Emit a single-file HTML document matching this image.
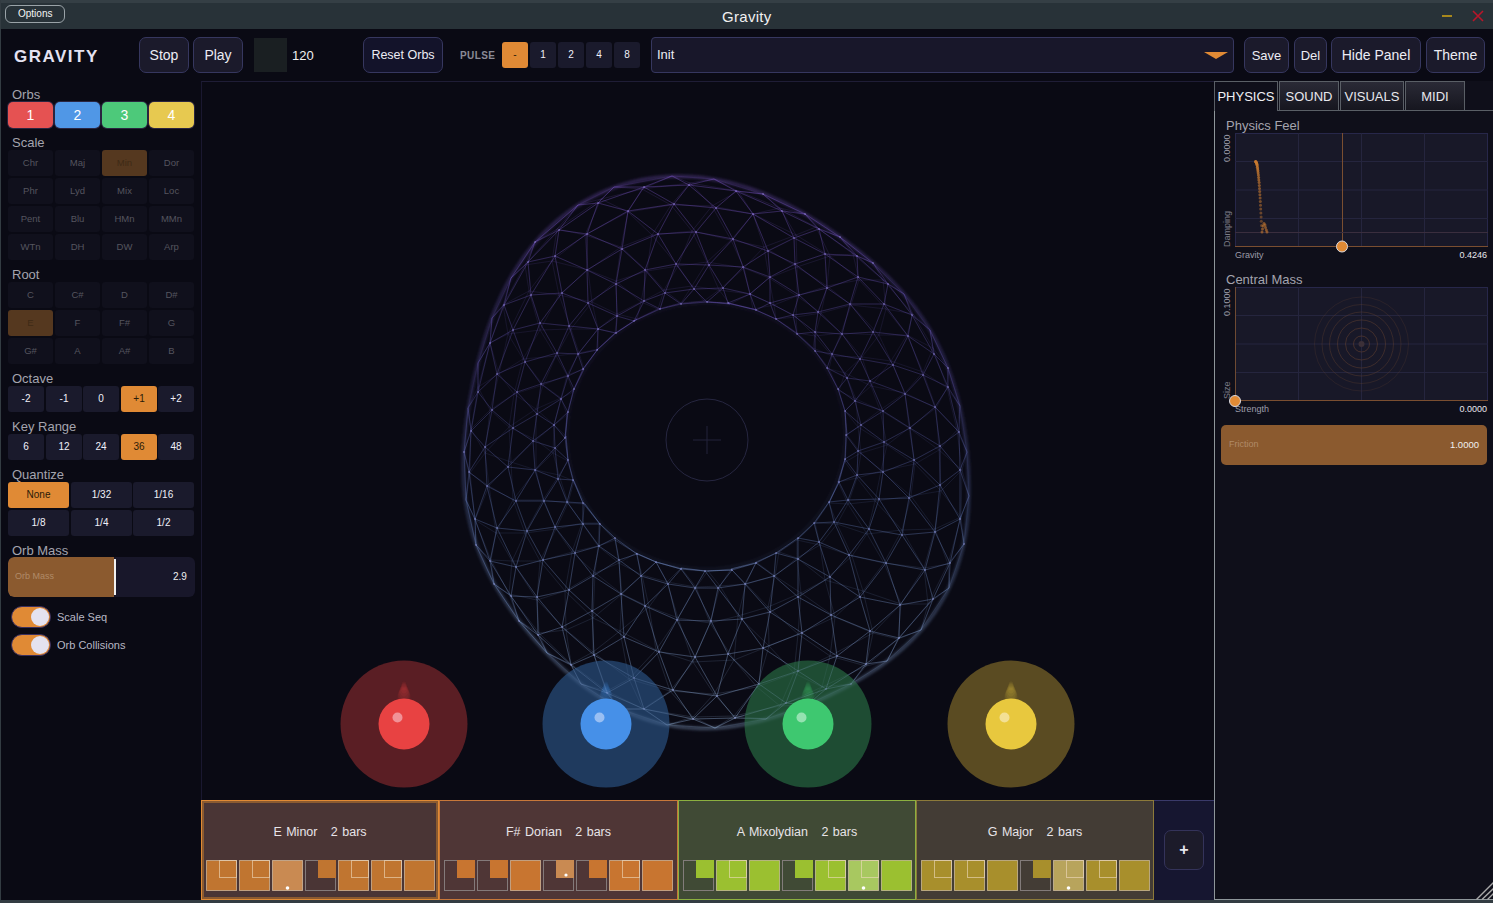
<!DOCTYPE html><html><head><meta charset="utf-8"><style>
*{box-sizing:border-box;margin:0;padding:0}
html,body{width:1493px;height:903px;overflow:hidden;background:#0a0a14;font-family:"Liberation Sans",sans-serif;color:#e8e8f0}
.a{position:absolute}
.t{position:absolute;white-space:nowrap;line-height:1}
.btn{position:absolute;background:#1b1a2b;border:1px solid #36375f;border-radius:7px;color:#ececf4;font-size:14px;display:flex;align-items:center;justify-content:center;line-height:1}
.g{position:absolute;background:#10101c;border-radius:3px;color:#55555f;font-size:9.5px;display:flex;align-items:center;justify-content:center;line-height:1}
.d{position:absolute;background:#1a1a2c;border-radius:3px;color:#f0f0f8;font-size:10px;display:flex;align-items:center;justify-content:center;line-height:1}
.on{background:#e08a35;color:#2a1a08}
.sel{background:#55381f;color:#3e2a16}
.lbl{position:absolute;font-size:13px;color:#a4a4ae;line-height:1;white-space:nowrap}
</style></head><body>
<div class="a" style="left:0;top:0;width:1493px;height:29px;background:#283238"></div>
<div class="a" style="left:0;top:0;width:1493px;height:3px;background:#353f45"></div>
<div class="a" style="left:0;top:0;width:1px;height:903px;background:#333c42"></div>
<div class="a" style="left:0;top:900px;width:1493px;height:3px;background:#333c42"></div>
<div class="a" style="left:5px;top:5px;width:60px;height:18px;border:1px solid #9aa3a8;border-radius:6px;"></div>
<div class="t" style="left:18px;top:9px;font-size:10px;color:#f4f4f4">Options</div>
<div class="t" style="left:722px;top:9px;font-size:15px;color:#f0f0f0;letter-spacing:0.3px">Gravity</div>
<div class="a" style="left:1442px;top:15px;width:10px;height:2px;background:#a8881c"></div>
<svg class="a" style="left:1471px;top:9px" width="14" height="14"><path d="M2 2L12 12M12 2L2 12" stroke="#b8162a" stroke-width="1.6"/></svg>

<div class="t" style="left:14px;top:48px;font-size:17px;font-weight:bold;color:#e4e2f2;letter-spacing:1.5px">GRAVITY</div>
<div class="btn" style="left:139px;top:37px;width:50px;height:36px">Stop</div>
<div class="btn" style="left:193px;top:37px;width:50px;height:36px">Play</div>
<div class="a" style="left:254px;top:38px;width:33px;height:34px;background:#1a1f22"></div>
<div class="t" style="left:292px;top:49px;font-size:13px;color:#f0f0f0">120</div>
<div class="btn" style="left:363px;top:37px;width:80px;height:36px;background:#13132a;font-size:12.5px">Reset Orbs</div>
<div class="t" style="left:460px;top:51px;font-size:10px;font-weight:bold;color:#8a8a96;letter-spacing:0.4px">PULSE</div>
<div class="d on" style="left:502px;top:42px;width:26px;height:26px">-</div>
<div class="d" style="left:530px;top:42px;width:26px;height:26px">1</div>
<div class="d" style="left:558px;top:42px;width:26px;height:26px">2</div>
<div class="d" style="left:586px;top:42px;width:26px;height:26px">4</div>
<div class="d" style="left:614px;top:42px;width:26px;height:26px">8</div>
<div class="btn" style="left:651px;top:37px;width:583px;height:36px;border-radius:4px;justify-content:flex-start;padding-left:5px;padding-bottom:2px;font-size:13px;background:#18172a">Init</div>
<svg class="a" style="left:1204px;top:50px" width="24" height="10"><path d="M0 2L24 2L12 9Z" fill="#e08a35"/></svg>
<div class="btn" style="left:1244px;top:37px;width:45px;height:36px;font-size:13px">Save</div>
<div class="btn" style="left:1294px;top:37px;width:33px;height:36px;font-size:13px">Del</div>
<div class="btn" style="left:1331px;top:37px;width:90px;height:36px">Hide Panel</div>
<div class="btn" style="left:1426px;top:37px;width:59px;height:36px">Theme</div>

<div class="lbl" style="left:12px;top:88px">Orbs</div>
<div class="a" style="left:7px;top:101px;width:47px;height:28px;border-radius:6px;background:#2a2540"></div>
<div class="a" style="left:8px;top:102px;width:45px;height:26px;border-radius:5px;background:#e55252;color:#fff;font-size:14px;display:flex;align-items:center;justify-content:center">1</div>
<div class="a" style="left:54px;top:101px;width:47px;height:28px;border-radius:6px;background:#2a2540"></div>
<div class="a" style="left:55px;top:102px;width:45px;height:26px;border-radius:5px;background:#5097e6;color:#fff;font-size:14px;display:flex;align-items:center;justify-content:center">2</div>
<div class="a" style="left:101px;top:101px;width:47px;height:28px;border-radius:6px;background:#2a2540"></div>
<div class="a" style="left:102px;top:102px;width:45px;height:26px;border-radius:5px;background:#4dc97a;color:#fff;font-size:14px;display:flex;align-items:center;justify-content:center">3</div>
<div class="a" style="left:148px;top:101px;width:47px;height:28px;border-radius:6px;background:#2a2540"></div>
<div class="a" style="left:149px;top:102px;width:45px;height:26px;border-radius:5px;background:#e7c950;color:#fff;font-size:14px;display:flex;align-items:center;justify-content:center">4</div>
<div class="lbl" style="left:12px;top:136px">Scale</div>
<div class="g" style="left:8px;top:150px;width:45px;height:26px">Chr</div>
<div class="g" style="left:55px;top:150px;width:45px;height:26px">Maj</div>
<div class="g sel" style="left:102px;top:150px;width:45px;height:26px">Min</div>
<div class="g" style="left:149px;top:150px;width:45px;height:26px">Dor</div>
<div class="g" style="left:8px;top:178px;width:45px;height:26px">Phr</div>
<div class="g" style="left:55px;top:178px;width:45px;height:26px">Lyd</div>
<div class="g" style="left:102px;top:178px;width:45px;height:26px">Mix</div>
<div class="g" style="left:149px;top:178px;width:45px;height:26px">Loc</div>
<div class="g" style="left:8px;top:206px;width:45px;height:26px">Pent</div>
<div class="g" style="left:55px;top:206px;width:45px;height:26px">Blu</div>
<div class="g" style="left:102px;top:206px;width:45px;height:26px">HMn</div>
<div class="g" style="left:149px;top:206px;width:45px;height:26px">MMn</div>
<div class="g" style="left:8px;top:234px;width:45px;height:26px">WTn</div>
<div class="g" style="left:55px;top:234px;width:45px;height:26px">DH</div>
<div class="g" style="left:102px;top:234px;width:45px;height:26px">DW</div>
<div class="g" style="left:149px;top:234px;width:45px;height:26px">Arp</div>
<div class="lbl" style="left:12px;top:268px">Root</div>
<div class="g" style="left:8px;top:282px;width:45px;height:26px">C</div>
<div class="g" style="left:55px;top:282px;width:45px;height:26px">C#</div>
<div class="g" style="left:102px;top:282px;width:45px;height:26px">D</div>
<div class="g" style="left:149px;top:282px;width:45px;height:26px">D#</div>
<div class="g sel" style="left:8px;top:310px;width:45px;height:26px">E</div>
<div class="g" style="left:55px;top:310px;width:45px;height:26px">F</div>
<div class="g" style="left:102px;top:310px;width:45px;height:26px">F#</div>
<div class="g" style="left:149px;top:310px;width:45px;height:26px">G</div>
<div class="g" style="left:8px;top:338px;width:45px;height:26px">G#</div>
<div class="g" style="left:55px;top:338px;width:45px;height:26px">A</div>
<div class="g" style="left:102px;top:338px;width:45px;height:26px">A#</div>
<div class="g" style="left:149px;top:338px;width:45px;height:26px">B</div>
<div class="lbl" style="left:12px;top:372px">Octave</div>
<div class="d" style="left:8px;top:386px;width:36px;height:26px">-2</div>
<div class="d" style="left:46px;top:386px;width:36px;height:26px">-1</div>
<div class="d" style="left:83px;top:386px;width:36px;height:26px">0</div>
<div class="d on" style="left:121px;top:386px;width:36px;height:26px">+1</div>
<div class="d" style="left:158px;top:386px;width:36px;height:26px">+2</div>
<div class="lbl" style="left:12px;top:420px">Key Range</div>
<div class="d" style="left:8px;top:434px;width:36px;height:26px">6</div>
<div class="d" style="left:46px;top:434px;width:36px;height:26px">12</div>
<div class="d" style="left:83px;top:434px;width:36px;height:26px">24</div>
<div class="d on" style="left:121px;top:434px;width:36px;height:26px">36</div>
<div class="d" style="left:158px;top:434px;width:36px;height:26px">48</div>
<div class="lbl" style="left:12px;top:468px">Quantize</div>
<div class="d on" style="left:8px;top:482px;width:61px;height:26px">None</div>
<div class="d" style="left:71px;top:482px;width:61px;height:26px">1/32</div>
<div class="d" style="left:133px;top:482px;width:61px;height:26px">1/16</div>
<div class="d" style="left:8px;top:510px;width:61px;height:26px">1/8</div>
<div class="d" style="left:71px;top:510px;width:61px;height:26px">1/4</div>
<div class="d" style="left:133px;top:510px;width:61px;height:26px">1/2</div>
<div class="lbl" style="left:12px;top:544px">Orb Mass</div>
<div class="a" style="left:8px;top:557px;width:187px;height:40px;border-radius:6px;background:#18172a;overflow:hidden"><div class="a" style="left:0;top:0;width:106px;height:40px;background:#8b5a2f;border-radius:6px 0 0 6px"></div><div class="a" style="left:106px;top:2px;width:1.5px;height:36px;background:#f0f0f0"></div></div>
<div class="t" style="left:15px;top:572px;font-size:9px;color:#b08a68">Orb Mass</div>
<div class="t" style="left:173px;top:572px;font-size:10px;color:#f0f0f0">2.9</div>
<div class="a" style="left:11px;top:606px;width:40px;height:22px;border-radius:11px;background:#e08a35;border:1px solid #3a3060"></div>
<div class="a" style="left:31px;top:608px;width:18px;height:18px;border-radius:9px;background:#e4e2f0"></div>
<div class="t" style="left:57px;top:612px;font-size:11px;color:#b8b8c4">Scale Seq</div>
<div class="a" style="left:11px;top:634px;width:40px;height:22px;border-radius:11px;background:#e08a35;border:1px solid #3a3060"></div>
<div class="a" style="left:31px;top:636px;width:18px;height:18px;border-radius:9px;background:#e4e2f0"></div>
<div class="t" style="left:57px;top:640px;font-size:11px;color:#b8b8c4">Orb Collisions</div>
<div class="a" style="left:201px;top:81px;width:1013px;height:720px;border-top:1px solid #1f1d36;border-left:1px solid #1a1830;background:#0a0a14"></div>
<svg class="a" style="left:0;top:0" width="1493" height="903"><defs><linearGradient id="tg" gradientUnits="userSpaceOnUse" x1="0" y1="177" x2="0" y2="730"><stop offset="0" stop-color="#9062ec" stop-opacity="0.9"/><stop offset="0.38" stop-color="#7468d8" stop-opacity="0.7"/><stop offset="0.6" stop-color="#7290dc" stop-opacity="0.8"/><stop offset="1" stop-color="#a8ccf8" stop-opacity="1"/></linearGradient><filter id="glow" x="-10%" y="-10%" width="120%" height="120%"><feGaussianBlur stdDeviation="1.5"/></filter></defs><path d="M967.2 453.0L967.8 459.6L968.2 466.3L968.6 473.0L968.8 479.7L968.9 486.4L968.9 493.2L968.7 500.0L968.4 506.9L967.9 513.7L967.3 520.6L966.4 527.5L965.4 534.4L964.1 541.3L962.6 548.1L960.9 554.9L959.0 561.7L956.8 568.4L954.4 575.0L951.7 581.6L948.7 588.1L945.6 594.4L942.1 600.6L938.5 606.7L934.6 612.7L930.4 618.5L926.1 624.1L921.5 629.6L916.7 634.9L911.8 640.0L906.7 644.9L901.4 649.7L896.0 654.3L890.4 658.7L884.7 663.0L879.0 667.1L873.1 671.0L867.1 674.8L861.1 678.5L855.0 682.0L848.9 685.5L842.6 688.8L836.4 692.0L830.1 695.0L823.7 698.0L817.3 700.9L810.8 703.7L804.3 706.4L797.7 709.0L791.0 711.4L784.3 713.8L777.6 716.0L770.8 718.1L763.9 720.0L756.9 721.8L749.9 723.4L742.9 724.8L735.8 726.0L728.6 726.9L721.4 727.7L714.2 728.2L706.9 728.4L699.7 728.4L692.4 728.1L685.2 727.6L678.0 726.7L670.8 725.6L663.7 724.2L656.6 722.5L649.6 720.5L642.7 718.3L635.9 715.8L629.3 713.0L622.7 710.0L616.2 706.8L609.9 703.3L603.7 699.7L597.6 695.8L591.7 691.8L585.9 687.7L580.3 683.4L574.8 679.0L569.4 674.4L564.1 669.8L559.0 665.0L553.9 660.2L549.0 655.3L544.2 650.3L539.5 645.2L534.9 640.1L530.4 634.9L526.1 629.7L521.8 624.4L517.6 619.0L513.5 613.5L509.6 608.0L505.7 602.4L502.0 596.7L498.5 591.0L495.0 585.1L491.7 579.2L488.6 573.2L485.6 567.2L482.8 561.0L480.1 554.8L477.7 548.5L475.4 542.2L473.3 535.7L471.4 529.3L469.8 522.8L468.3 516.2L467.0 509.6L465.9 503.0L465.0 496.3L464.3 489.6L463.8 483.0L463.5 476.3L463.3 469.6L463.3 463.0L463.5 456.3L463.8 449.7L464.2 443.1L464.8 436.5L465.5 429.9L466.2 423.3L467.1 416.8L468.1 410.2L469.2 403.7L470.3 397.2L471.6 390.7L472.9 384.1L474.3 377.6L475.8 371.1L477.4 364.6L479.1 358.0L480.9 351.5L482.7 345.0L484.7 338.4L486.8 331.8L489.1 325.3L491.5 318.7L494.0 312.2L496.7 305.7L499.6 299.2L502.6 292.8L505.8 286.4L509.2 280.0L512.8 273.7L516.6 267.6L520.7 261.5L524.9 255.5L529.3 249.7L534.0 244.0L538.8 238.4L543.9 233.0L549.2 227.8L554.7 222.8L560.4 218.0L566.2 213.4L572.3 209.1L578.5 204.9L584.9 201.1L591.5 197.5L598.2 194.1L605.0 191.1L611.9 188.3L619.0 185.8L626.1 183.6L633.3 181.7L640.6 180.0L648.0 178.7L655.3 177.7L662.7 176.9L670.1 176.4L677.6 176.3L685.0 176.4L692.3 176.7L699.7 177.3L707.0 178.2L714.2 179.4L721.4 180.7L728.5 182.3L735.5 184.1L742.4 186.1L749.2 188.3L756.0 190.7L762.6 193.2L769.1 195.9L775.5 198.8L781.9 201.7L788.1 204.8L794.2 208.0L800.2 211.3L806.1 214.7L811.9 218.2L817.6 221.7L823.3 225.3L828.8 229.0L834.3 232.8L839.7 236.6L845.0 240.5L850.2 244.4L855.4 248.4L860.5 252.5L865.5 256.6L870.5 260.8L875.3 265.1L880.1 269.4L884.8 273.9L889.4 278.4L894.0 283.0L898.4 287.8L902.7 292.6L906.9 297.5L911.0 302.5L915.0 307.6L918.8 312.9L922.5 318.2L926.1 323.6L929.5 329.1L932.7 334.7L935.9 340.4L938.8 346.2L941.6 352.1L944.2 358.0L946.7 364.0L949.0 370.1L951.2 376.2L953.2 382.4L955.1 388.6L956.9 394.9L958.5 401.2L960.0 407.6L961.3 414.0L962.6 420.4L963.7 426.9L964.7 433.3L965.7 439.9L966.5 446.4L967.2 453.0Z" stroke="url(#tg)" stroke-width="2.5" stroke-opacity="0.22" fill="none" filter="url(#glow)"/><path d="M845.0 436.0L845.0 439.5L844.8 443.0L844.6 446.5L844.2 450.0L843.8 453.4L843.3 456.9L842.7 460.3L841.9 463.8L841.1 467.2L840.2 470.6L839.2 473.9L838.1 477.3L837.0 480.6L835.7 483.9L834.3 487.1L832.9 490.3L831.3 493.5L829.7 496.6L828.0 499.7L826.2 502.8L824.3 505.8L822.4 508.7L820.4 511.6L818.2 514.5L816.0 517.3L813.8 520.0L811.4 522.7L809.0 525.3L806.5 527.9L804.0 530.4L801.3 532.8L798.6 535.1L795.9 537.4L793.1 539.7L790.2 541.8L787.3 543.9L784.3 545.9L781.2 547.8L778.1 549.7L775.0 551.5L771.8 553.2L768.5 554.8L765.2 556.3L761.9 557.8L758.6 559.1L755.2 560.4L751.7 561.6L748.3 562.7L744.8 563.7L741.2 564.7L737.7 565.5L734.1 566.2L730.5 566.9L726.9 567.5L723.3 568.0L719.7 568.4L716.0 568.7L712.4 568.9L708.7 569.0L705.1 569.0L701.4 568.9L697.8 568.8L694.1 568.5L690.5 568.2L686.9 567.7L683.3 567.2L679.7 566.6L676.1 565.9L672.5 565.1L669.0 564.2L665.5 563.2L662.0 562.2L658.6 561.0L655.1 559.8L651.8 558.5L648.4 557.0L645.1 555.6L641.8 554.0L638.6 552.3L635.4 550.6L632.3 548.8L629.3 546.9L626.2 544.9L623.3 542.9L620.4 540.8L617.5 538.6L614.7 536.3L612.0 534.0L609.3 531.6L606.7 529.1L604.2 526.6L601.8 524.0L599.4 521.3L597.1 518.6L594.8 515.9L592.7 513.0L590.6 510.2L588.6 507.2L586.7 504.3L584.9 501.2L583.1 498.2L581.5 495.1L579.9 491.9L578.4 488.7L577.0 485.5L575.7 482.2L574.4 478.9L573.3 475.6L572.3 472.2L571.3 468.9L570.5 465.5L569.7 462.1L569.0 458.6L568.5 455.2L568.0 451.7L567.6 448.2L567.3 444.7L567.1 441.2L567.0 437.7L567.0 434.3L567.1 430.8L567.3 427.3L567.6 423.8L568.0 420.3L568.5 416.8L569.0 413.4L569.7 409.9L570.5 406.5L571.3 403.1L572.3 399.8L573.3 396.4L574.4 393.1L575.7 389.8L577.0 386.5L578.4 383.3L579.9 380.1L581.5 376.9L583.1 373.8L584.9 370.8L586.7 367.7L588.6 364.8L590.6 361.8L592.7 359.0L594.8 356.1L597.1 353.4L599.4 350.7L601.8 348.0L604.2 345.4L606.7 342.9L609.3 340.4L612.0 338.0L614.7 335.7L617.5 333.4L620.4 331.2L623.3 329.1L626.2 327.1L629.3 325.1L632.3 323.2L635.4 321.4L638.6 319.7L641.8 318.0L645.1 316.4L648.4 315.0L651.8 313.5L655.1 312.2L658.6 311.0L662.0 309.8L665.5 308.8L669.0 307.8L672.5 306.9L676.1 306.1L679.7 305.4L683.3 304.8L686.9 304.3L690.5 303.8L694.1 303.5L697.8 303.2L701.4 303.1L705.1 303.0L708.7 303.0L712.4 303.1L716.0 303.3L719.7 303.6L723.3 304.0L726.9 304.5L730.5 305.1L734.1 305.8L737.7 306.5L741.2 307.3L744.8 308.3L748.3 309.3L751.7 310.4L755.2 311.6L758.6 312.9L761.9 314.2L765.2 315.7L768.5 317.2L771.8 318.8L775.0 320.5L778.1 322.3L781.2 324.2L784.3 326.1L787.3 328.1L790.2 330.2L793.1 332.3L795.9 334.6L798.6 336.9L801.3 339.2L804.0 341.6L806.5 344.1L809.0 346.7L811.4 349.3L813.8 352.0L816.0 354.7L818.2 357.5L820.4 360.4L822.4 363.3L824.3 366.2L826.2 369.2L828.0 372.3L829.7 375.4L831.3 378.5L832.9 381.7L834.3 384.9L835.7 388.1L837.0 391.4L838.1 394.7L839.2 398.1L840.2 401.4L841.1 404.8L841.9 408.2L842.7 411.7L843.3 415.1L843.8 418.6L844.2 422.0L844.6 425.5L844.8 429.0L845.0 432.5L845.0 436.0Z" stroke="url(#tg)" stroke-width="2" stroke-opacity="0.06" fill="none" filter="url(#glow)"/><path d="M967 452L969 496M967 452L962 470M962 470L969 496M962 470L961 517M962 470L939 450M941 491L962 470M939 450L941 491M939 450L915 464M915 464L941 491M915 464L911 496M915 464L887 445M881 471L915 464M887 445L881 471M887 445L861 453M861 453L881 471M861 453L857 478M861 453L847 435M845 462L861 453M847 435L845 462M847 435L846 435M846 435L845 462M969 496L964 544M969 496L961 517M961 517L964 544M961 517L948 564M961 517L941 491M935 529L961 517M941 491L935 529M941 491L911 496M911 496L935 529M911 496L902 530M911 496L881 471M875 501L911 496M881 471L875 501M881 471L857 478M857 478L875 501M857 478L848 504M857 478L845 462M838 482L857 478M845 462L838 482M845 462L845 459M964 544L949 588M964 544L948 564M948 564L949 588M948 564L928 604M948 564L935 529M924 568L948 564M935 529L924 568M935 529L902 530M902 530L924 568M902 530L884 563M902 530L875 501M867 534L902 530M875 501L867 534M875 501L848 504M848 504L867 534M848 504L837 524M848 504L838 482M829 503L848 504M838 482L829 503M949 588L921 630M949 588L928 604M928 604L921 630M928 604L898 639M928 604L924 568M901 604L928 604M924 568L901 604M924 568L884 563M884 563L901 604M884 563L863 591M884 563L867 534M852 556L884 563M867 534L852 556M867 534L837 524M837 524L852 556M837 524L820 545M837 524L829 503M815 523L837 524M829 503L815 523M829 503L829 502M829 502L815 523M921 630L887 661M921 630L898 639M898 639L887 661M898 639L866 666M898 639L901 604M873 633L898 639M901 604L873 633M901 604L863 591M863 591L873 633M863 591L835 617M863 591L852 556M825 580L863 591M852 556L825 580M852 556L820 545M820 545L825 580M820 545L797 558M820 545L815 523M797 540L820 545M815 523L797 540M815 523L814 523M814 523L797 540M887 661L851 684M887 661L866 666M866 666L851 684M866 666L822 687M866 666L873 633M830 656L866 666M873 633L830 656M873 633L835 617M835 617L830 656M835 617L798 634M835 617L825 580M801 593L835 617M825 580L801 593M825 580L797 558M797 558L801 593M797 558L775 576M797 558L797 540M779 552L797 558M797 540L779 552M797 540L798 538M798 538L779 552M851 684L807 705M851 684L822 687M822 687L807 705M822 687L780 706M822 687L830 656M794 673L822 687M830 656L794 673M830 656L798 634M798 634L794 673M798 634L769 646M798 634L801 593M768 607L798 634M801 593L768 607M801 593L775 576M775 576L768 607M775 576L746 584M775 576L779 552M756 562L775 576M779 552L756 562M779 552L776 553M776 553L756 562M807 705L766 719M807 705L780 706M780 706L766 719M780 706L734 716M780 706L794 673M757 687L780 706M794 673L757 687M794 673L769 646M769 646L757 687M769 646L734 660M769 646L768 607M738 616L769 646M768 607L738 616M768 607L746 584M746 584L738 616M746 584L720 586M746 584L756 562M731 569L746 584M756 562L731 569M766 719L715 728M766 719L734 716M734 716L715 728M734 716L693 717M734 716L757 687M714 694L734 716M757 687L714 694M757 687L734 660M734 660L714 694M734 660L693 662M734 660L738 616M710 623L734 660M738 616L710 623M738 616L720 586M720 586L710 623M720 586L696 587M720 586L731 569M708 571L720 586M731 569L708 571M715 728L667 725M715 728L693 717M693 717L667 725M693 717L643 709M693 717L714 694M670 691L693 717M714 694L670 691M714 694L693 662M693 662L670 691M693 662L656 650M693 662L710 623M678 618L693 662M710 623L678 618M710 623L696 587M696 587L678 618M696 587L667 582M696 587L708 571M681 568L696 587M708 571L681 568M708 571L705 571M667 725L620 709M667 725L643 709M643 709L620 709M643 709L607 691M643 709L670 691M629 679L643 709M670 691L629 679M670 691L656 650M656 650L629 679M656 650L620 631M656 650L678 618M649 607L656 650M678 618L649 607M678 618L667 582M667 582L649 607M667 582L642 575M667 582L681 568M656 562L667 582M681 568L656 562M620 709L581 684M620 709L607 691M607 691L581 684M607 691L571 664M607 691L629 679M593 652L607 691M629 679L593 652M629 679L620 631M620 631L593 652M620 631L593 618M620 631L649 607M622 594L620 631M649 607L622 594M649 607L642 575M642 575L622 594M642 575L619 563M642 575L656 562M636 553L642 575M656 562L636 553M581 684L547 653M581 684L571 664M571 664L547 653M571 664L539 633M571 664L593 652M566 630L571 664M593 652L566 630M593 652L593 618M593 618L566 630M593 618L565 591M593 618L622 594M595 573L593 618M622 594L595 573M622 594L619 563M619 563L595 573M619 563L598 546M619 563L636 553M615 540L619 563M636 553L615 540M637 554L615 540M547 653L539 633M539 633L519 621M539 633L509 594M539 633L566 630M537 600L539 633M566 630L537 600M566 630L565 591M565 591L537 600M565 591L540 561M565 591L595 573M572 552L565 591M595 573L572 552M595 573L598 546M598 546L572 552M598 546L582 523M598 546L615 540M599 523L598 546M615 540L599 523M615 540L615 538M615 538L599 523M519 621L509 594M509 594L494 584M509 594L491 560M509 594L537 600M512 561L509 594M537 600L512 561M537 600L540 561M540 561L512 561M540 561L525 533M540 561L572 552M556 529L540 561M572 552L556 529M572 552L582 523M582 523L556 529M582 523L568 503M582 523L599 523M585 504L582 523M599 523L585 504M599 523L600 524M494 584L491 560M491 560L476 545M491 560L475 520M491 560L512 561M496 533L491 560M512 561L496 533M512 561L525 533M525 533L496 533M525 533L513 500M525 533L556 529M543 500L525 533M556 529L543 500M556 529L568 503M568 503L543 500M568 503L559 475M568 503L585 504M574 481L568 503M585 504L574 481M476 545L475 520M475 520L466 500M475 520L470 473M475 520L496 533M489 486L475 520M496 533L489 486M496 533L513 500M513 500L489 486M513 500L511 462M513 500L543 500M536 470L513 500M543 500L536 470M543 500L559 475M559 475L536 470M559 475L553 453M559 475L574 481M568 461L559 475M574 481L568 461M573 480L568 461M466 500L470 473M470 473L464 452M470 473L471 429M470 473L489 486M485 453L470 473M489 486L485 453M489 486L511 462M511 462L485 453M511 462L509 427M511 462L536 470M536 440L511 462M536 470L536 440M536 470L553 453M553 453L536 440M553 453L554 425M553 453L568 461M566 436L553 453M568 461L566 436M568 461L568 460M464 452L471 429M471 429L468 408M471 429L478 387M471 429L485 453M490 410L471 429M485 453L490 410M485 453L509 427M509 427L490 410M509 427L514 394M509 427L536 440M536 409L509 427M536 440L536 409M536 440L554 425M554 425L536 409M554 425L561 398M554 425L566 436M567 415L554 425M566 436L567 415M468 408L478 363M468 408L478 387M478 387L478 363M478 387L490 343M478 387L490 410M499 374L478 387M490 410L499 374M490 410L514 394M514 394L499 374M514 394L523 359M514 394L536 409M543 385L514 394M536 409L543 385M536 409L561 398M561 398L543 385M561 398L567 375M561 398L567 415M573 392L561 398M567 415L573 392M568 412L573 392M478 363L492 318M478 363L490 343M490 343L492 318M490 343L503 305M490 343L499 374M508 334L490 343M499 374L508 334M499 374L523 359M523 359L508 334M523 359L540 330M523 359L543 385M556 356L523 359M543 385L556 356M543 385L567 375M567 375L556 356M567 375L579 353M567 375L573 392M584 369L567 375M573 392L584 369M492 318L511 278M492 318L503 305M503 305L511 278M503 305L525 265M503 305L508 334M529 291L503 305M508 334L529 291M508 334L540 330M540 330L529 291M540 330L559 295M540 330L556 356M571 329L540 330M556 356L571 329M556 356L579 353M579 353L571 329M579 353L598 329M579 353L584 369M598 349L579 353M584 369L598 349M511 278L525 265M525 265L535 242M525 265L557 229M525 265L529 291M552 261L525 265M529 291L552 261M529 291L559 295M559 295L552 261M559 295L588 270M559 295L571 329M592 302L559 295M571 329L592 302M571 329L598 329M598 329L592 302M598 329L617 314M598 329L598 349M615 333L598 329M598 349L615 333M535 242L557 229M557 229L578 205M557 229L601 199M557 229L552 261M585 235L557 229M552 261L585 235M552 261L588 270M588 270L585 235M588 270L621 247M588 270L592 302M616 281L588 270M592 302L616 281M592 302L617 314M617 314L616 281M617 314L641 302M617 314L615 333M637 319L617 314M615 333L637 319M615 333L616 333M578 205L614 187M578 205L601 199M601 199L614 187M601 199L642 189M601 199L585 235M628 212L601 199M585 235L628 212M585 235L621 247M621 247L628 212M621 247L652 235M621 247L616 281M647 271L621 247M616 281L647 271M616 281L641 302M641 302L647 271M641 302L664 290M641 302L637 319M658 309L641 302M637 319L658 309M634 321L658 309M614 187L672 176M614 187L642 189M642 189L672 176M642 189L690 183M642 189L628 212M671 205L642 189M628 212L671 205M628 212L652 235M652 235L671 205M652 235L692 231M652 235L647 271M678 266L652 235M647 271L678 266M647 271L664 290M664 290L678 266M664 290L692 286M664 290L658 309M681 303L664 290M658 309L681 303M658 309L660 309M660 309L681 303M672 176L714 179M672 176L690 183M690 183L714 179M690 183L738 191M690 183L671 205M712 206L690 183M671 205L712 206M671 205L692 231M692 231L712 206M692 231L731 240M692 231L678 266M707 262L692 231M678 266L707 262M678 266L692 286M692 286L707 262M692 286L719 290M692 286L681 303M704 301L692 286M681 303L704 301M681 303L681 304M681 304L704 301M714 179L763 194M714 179L738 191M738 191L763 194M738 191L780 208M738 191L712 206M753 214L738 191M712 206L753 214M712 206L731 240M731 240L753 214M731 240L764 247M731 240L707 262M744 268L731 240M707 262L744 268M707 262L719 290M719 290L744 268M719 290L750 294M719 290L704 301M730 304L719 290M704 301L730 304M704 301L707 302M763 194L780 208M780 208L805 214M780 208L816 227M780 208L753 214M796 235L780 208M753 214L796 235M753 214L764 247M764 247L796 235M764 247L797 267M764 247L744 268M769 278L764 247M744 268L769 278M744 268L750 294M750 294L769 278M750 294L774 305M750 294L730 304M753 309L750 294M730 304L753 309M805 214L816 227M816 227L840 237M816 227L853 254M816 227L796 235M830 256L816 227M796 235L830 256M796 235L797 267M797 267L830 256M797 267L827 286M797 267L769 278M797 296L797 267M769 278L797 296M769 278L774 305M774 305L797 296M774 305L796 317M774 305L753 309M776 319L774 305M753 309L776 319M756 310L776 319M840 237L853 254M853 254L873 263M853 254L883 280M853 254L830 256M859 280L853 254M830 256L859 280M830 256L827 286M827 286L859 280M827 286L851 305M827 286L797 296M821 313L827 286M797 296L821 313M797 296L796 317M796 317L821 313M796 317L815 336M796 317L776 319M797 333L796 317M776 319L797 333M776 319L776 319M776 319L797 333M873 263L904 294M873 263L883 280M883 280L904 294M883 280L913 314M883 280L859 280M886 309L883 280M859 280L886 309M859 280L851 305M851 305L886 309M851 305L879 335M851 305L821 313M841 333L851 305M821 313L841 333M821 313L815 336M815 336L841 333M815 336L832 356M815 336L797 333M813 348L815 336M797 333L813 348M797 333L797 334M797 334L813 348M904 294L930 330M904 294L913 314M913 314L930 330M913 314L933 348M913 314L886 309M907 335L913 314M886 309L907 335M886 309L879 335M879 335L907 335M879 335L891 361M879 335L841 333M862 357L879 335M841 333L862 357M841 333L832 356M832 356L862 357M832 356L845 373M832 356L813 348M829 369L832 356M813 348L829 369M813 348L815 351M815 351L829 369M930 330L933 348M933 348L948 368M933 348L947 388M933 348L907 335M923 372L933 348M907 335L923 372M907 335L891 361M891 361L923 372M891 361L905 393M891 361L862 357M871 386L891 361M862 357L871 386M862 357L845 373M845 373L871 386M845 373L856 399M845 373L829 369M839 391L845 373M829 369L839 391M829 369L827 368M827 368L839 391M948 368L947 388M947 388L960 406M947 388L957 430M947 388L923 372M936 408L947 388M923 372L936 408M923 372L905 393M905 393L936 408M905 393L909 428M905 393L871 386M880 410L905 393M871 386L880 410M871 386L856 399M856 399L880 410M856 399L858 427M856 399L839 391M845 411L856 399M839 391L845 411M839 391L838 389M838 389L845 411M960 406L967 452M960 406L957 430M957 430L967 452M957 430L962 470M957 430L936 408M939 450L957 430M936 408L939 450M936 408L909 428M909 428L939 450M909 428L915 464M909 428L880 410M887 445L909 428M880 410L887 445M880 410L858 427M858 427L887 445M858 427L861 453M858 427L845 411M847 435L858 427M845 411L847 435" stroke="url(#tg)" stroke-width="0.8" stroke-opacity="0.099" fill="none"/><path d="M846 435L845 459M846 435L858 451M858 451L845 459M858 451L857 475M858 451L884 442M883 472L858 451M884 442L883 472M884 442L914 460M914 460L883 472M914 460L909 498M914 460L940 446M940 485L914 460M940 446L940 485M940 446L960 470M960 470L940 485M960 470L960 519M960 470L967 452M969 496L960 470M845 459L839 482M845 459L857 475M857 475L839 482M857 475L848 500M857 475L883 472M879 499L857 475M883 472L879 499M883 472L909 498M909 498L879 499M909 498L902 535M909 498L940 485M935 532L909 498M940 485L935 532M940 485L960 519M960 519L935 532M960 519L950 563M960 519L969 496M964 544L960 519M845 459L838 482M839 482L829 502M839 482L848 500M848 500L829 502M848 500L834 522M848 500L879 499M869 529L848 500M879 499L869 529M879 499L902 535M902 535L869 529M902 535L886 563M902 535L935 532M925 570L902 535M935 532L925 570M935 532L950 563M950 563L925 570M950 563L933 599M950 563L964 544M949 588L950 563M838 482L839 482M839 482L829 503M829 502L814 523M829 502L834 522M834 522L814 523M834 522L819 542M834 522L869 529M849 555L834 522M869 529L849 555M869 529L886 563M886 563L849 555M886 563L860 597M886 563L925 570M900 605L886 563M925 570L900 605M925 570L933 599M933 599L900 605M933 599L899 638M933 599L949 588M921 630L933 599M814 523L798 538M814 523L819 542M819 542L798 538M819 542L798 559M819 542L849 555M830 577L819 542M849 555L830 577M849 555L860 597M860 597L830 577M860 597L831 615M860 597L900 605M870 631L860 597M900 605L870 631M900 605L899 638M899 638L870 631M899 638L866 664M899 638L921 630M887 661L899 638M798 538L776 553M798 538L798 559M798 559L776 553M798 559L774 576M798 559L830 577M798 597L798 559M830 577L798 597M830 577L831 615M831 615L798 597M831 615L802 633M831 615L870 631M837 656L831 615M870 631L837 656M870 631L866 664M866 664L837 656M866 664L826 689M866 664L887 661M851 684L866 664M776 553L756 563M776 553L774 576M774 576L756 563M774 576L745 584M774 576L798 597M770 612L774 576M798 597L770 612M798 597L802 633M802 633L770 612M802 633L763 648M802 633L837 656M798 671L802 633M837 656L798 671M837 656L826 689M826 689L798 671M826 689L786 703M826 689L851 684M807 705L826 689M756 563L732 570M756 563L745 584M745 584L732 570M745 584L718 588M745 584L770 612M742 619L745 584M770 612L742 619M770 612L763 648M763 648L742 619M763 648L728 654M763 648L798 671M759 684L763 648M798 671L759 684M798 671L786 703M786 703L759 684M786 703L735 718M786 703L807 705M766 719L786 703M756 562L756 563M756 563L731 569M732 570L705 571M732 570L718 588M718 588L705 571M718 588L695 588M718 588L742 619M711 621L718 588M742 619L711 621M742 619L728 654M728 654L711 621M728 654L695 657M728 654L759 684M717 696L728 654M759 684L717 696M759 684L735 718M735 718L717 696M735 718L693 719M735 718L766 719M715 728L735 718M731 569L732 570M732 570L708 571M705 571L681 569M705 571L695 588M695 588L681 569M695 588L668 584M695 588L711 621M677 620L695 588M711 621L677 620M711 621L695 657M695 657L677 620M695 657L659 652M695 657L717 696M673 690L695 657M717 696L673 690M717 696L693 719M693 719L673 690M693 719L644 709M693 719L715 728M667 725L693 719M705 571L681 568M681 569L656 562M681 569L668 584M668 584L656 562M668 584L641 576M668 584L677 620M645 606L668 584M677 620L645 606M677 620L659 652M659 652L645 606M659 652L624 637M659 652L673 690M634 678L659 652M673 690L634 678M673 690L644 709M644 709L634 678M644 709L607 693M644 709L667 725M620 709L644 709M681 568L681 569M681 569L656 562M656 562L637 554M656 562L641 576M641 576L637 554M641 576L619 560M641 576L645 606M621 594L641 576M645 606L621 594M645 606L624 637M624 637L621 594M624 637L592 611M624 637L634 678M594 655L624 637M634 678L594 655M634 678L607 693M607 693L594 655M607 693L571 665M607 693L620 709M581 684L607 693M656 562L656 562M656 562L636 553M637 554L615 538M637 554L619 560M619 560L615 538M619 560L599 546M619 560L621 594M593 576L619 560M621 594L593 576M621 594L592 611M592 611L593 576M592 611L569 590M592 611L594 655M562 627L592 611M594 655L562 627M594 655L571 665M571 665L562 627M571 665L538 635M571 665L581 684M547 653L571 665M636 553L637 554M615 538L600 524M615 538L599 546M599 546L600 524M599 546L583 524M599 546L593 576M575 553L599 546M593 576L575 553M593 576L569 590M569 590L575 553M569 590L543 560M569 590L562 627M537 597L569 590M562 627L537 597M562 627L538 635M538 635L537 597M538 635L511 596M538 635L547 653M519 621L538 635M547 653L519 621M600 524L583 503M600 524L583 524M583 524L583 503M583 524L567 502M583 524L575 553M555 527L583 524M575 553L555 527M575 553L543 560M543 560L555 527M543 560L527 531M543 560L537 597M516 567L543 560M537 597L516 567M537 597L511 596M511 596L516 567M511 596L490 561M511 596L519 621M494 584L511 596M519 621L494 584M600 524L585 504M583 503L573 480M583 503L567 502M567 502L573 480M567 502L558 479M567 502L555 527M544 501L567 502M555 527L544 501M555 527L527 531M527 531L544 501M527 531L516 501M527 531L516 567M497 528L527 531M516 567L497 528M516 567L490 561M490 561L497 528M490 561L475 519M490 561L494 584M476 545L490 561M494 584L476 545M585 504L583 503M583 503L574 481M573 480L568 460M573 480L558 479M558 479L568 460M558 479L555 448M558 479L544 501M535 470L558 479M544 501L535 470M544 501L516 501M516 501L535 470M516 501L508 467M516 501L497 528M487 486L516 501M497 528L487 486M497 528L475 519M475 519L487 486M475 519L469 472M475 519L476 545M466 500L475 519M476 545L466 500M574 481L573 480M568 460L565 438M568 460L555 448M555 448L565 438M555 448L554 425M555 448L535 470M533 441L555 448M535 470L533 441M535 470L508 467M508 467L533 441M508 467L513 428M508 467L487 486M485 447L508 467M487 486L485 447M487 486L469 472M469 472L485 447M469 472L471 431M469 472L466 500M464 452L469 472M466 500L464 452M568 460L566 436M565 438L568 412M565 438L554 425M554 425L568 412M554 425L561 399M554 425L533 441M537 414L554 425M533 441L537 414M533 441L513 428M513 428L537 414M513 428L517 392M513 428L485 447M492 410L513 428M485 447L492 410M485 447L471 431M471 431L492 410M471 431L478 392M471 431L464 452M468 408L471 431M464 452L468 408M566 436L565 438M565 438L567 415M568 412L574 389M568 412L561 399M561 399L574 389M561 399L568 376M561 399L537 414M541 384L561 399M537 414L541 384M537 414L517 392M517 392L541 384M517 392L525 362M517 392L492 410M497 374L517 392M492 410L497 374M492 410L478 392M478 392L497 374M478 392L490 343M478 392L468 408M478 363L478 392M567 415L568 412M574 389L583 369M574 389L568 376M568 376L583 369M568 376L578 354M568 376L541 384M557 353L568 376M541 384L557 353M541 384L525 362M525 362L557 353M525 362L540 323M525 362L497 374M513 330L525 362M497 374L513 330M497 374L490 343M490 343L513 330M490 343L504 305M490 343L478 363M492 318L490 343M573 392L574 389M574 389L584 369M583 369L597 350M583 369L578 354M578 354L597 350M578 354L598 329M578 354L557 353M569 326L578 354M557 353L569 326M557 353L540 323M540 323L569 326M540 323L562 293M540 323L513 330M531 295L540 323M513 330L531 295M513 330L504 305M504 305L531 295M504 305L528 262M504 305L492 318M511 278L504 305M584 369L583 369M583 369L598 349M597 350L616 333M597 350L598 329M598 329L616 333M598 329L617 316M598 329L569 326M588 303L598 329M569 326L588 303M569 326L562 293M562 293L588 303M562 293L587 270M562 293L531 295M555 256L562 293M531 295L555 256M531 295L528 262M528 262L555 256M528 262L559 230M528 262L511 278M535 242L528 262M511 278L535 242M598 349L597 350M597 350L615 333M616 333L634 321M616 333L617 316M617 316L634 321M617 316L644 301M617 316L588 303M616 284L617 316M588 303L616 284M588 303L587 270M587 270L616 284M587 270L622 249M587 270L555 256M587 234L587 270M555 256L587 234M555 256L559 230M559 230L587 234M559 230L598 203M559 230L535 242M578 205L559 230M535 242L578 205M616 333L637 319M634 321L660 309M634 321L644 301M644 301L660 309M644 301L665 293M644 301L616 284M645 270L644 301M616 284L645 270M616 284L622 249M622 249L645 270M622 249L658 234M622 249L587 234M628 211L622 249M587 234L628 211M587 234L598 203M598 203L628 211M598 203L644 187M598 203L578 205M614 187L598 203M637 319L634 321M660 309L681 304M660 309L665 293M665 293L681 304M665 293L694 289M665 293L645 270M676 264L665 293M645 270L676 264M645 270L658 234M658 234L676 264M658 234L696 232M658 234L628 211M674 204L658 234M628 211L674 204M628 211L644 187M644 187L674 204M644 187L689 185M644 187L614 187M672 176L644 187M681 304L707 302M681 304L694 289M694 289L707 302M694 289L723 288M694 289L676 264M709 265L694 289M676 264L709 265M676 264L696 232M696 232L709 265M696 232L733 239M696 232L674 204M716 208L696 232M674 204L716 208M674 204L689 185M689 185L716 208M689 185L736 191M689 185L672 176M714 179L689 185M707 302L728 303M707 302L723 288M723 288L728 303M723 288L750 294M723 288L709 265M743 267L723 288M709 265L743 267M709 265L733 239M733 239L743 267M733 239L768 251M733 239L716 208M753 214L733 239M716 208L753 214M716 208L736 191M736 191L753 214M736 191L782 211M736 191L714 179M763 194L736 191M707 302L730 304M728 303L756 310M728 303L750 294M750 294L756 310M750 294L770 303M750 294L743 267M770 277L750 294M743 267L770 277M743 267L768 251M768 251L770 277M768 251L795 264M768 251L753 214M794 238L768 251M753 214L794 238M753 214L782 211M782 211L794 238M782 211L819 229M782 211L763 194M805 214L782 211M763 194L805 214M730 304L728 303M728 303L753 309M756 310L776 319M756 310L770 303M770 303L776 319M770 303L793 315M770 303L770 277M799 295L770 303M770 277L799 295M770 277L795 264M795 264L799 295M795 264L827 288M795 264L794 238M825 254L795 264M794 238L825 254M794 238L819 229M819 229L825 254M819 229L857 256M819 229L805 214M840 237L819 229M805 214L840 237M753 309L756 310M776 319L797 334M776 319L793 315M793 315L797 334M793 315L815 332M793 315L799 295M818 312L793 315M799 295L818 312M799 295L827 288M827 288L818 312M827 288L850 304M827 288L825 254M858 277L827 288M825 254L858 277M825 254L857 256M857 256L858 277M857 256L888 284M857 256L840 237M873 263L857 256M840 237L873 263M797 334L815 351M797 334L815 332M815 332L815 351M815 332L832 354M815 332L818 312M842 334L815 332M818 312L842 334M818 312L850 304M850 304L842 334M850 304L873 332M850 304L858 277M884 304L850 304M858 277L884 304M858 277L888 284M888 284L884 304M888 284L912 315M888 284L873 263M904 294L888 284M815 351L827 368M815 351L832 354M832 354L827 368M832 354L847 378M832 354L842 334M860 359L832 354M842 334L860 359M842 334L873 332M873 332L860 359M873 332L893 365M873 332L884 304M908 336L873 332M884 304L908 336M884 304L912 315M912 315L908 336M912 315L934 354M912 315L904 294M930 330L912 315M827 368L838 389M827 368L847 378M847 378L838 389M847 378L855 401M847 378L860 359M870 381L847 378M860 359L870 381M860 359L893 365M893 365L870 381M893 365L905 394M893 365L908 336M923 375L893 365M908 336L923 375M908 336L934 354M934 354L923 375M934 354L948 387M934 354L930 330M948 368L934 354M930 330L948 368M838 389L845 411M838 389L855 401M855 401L845 411M855 401L861 425M855 401L870 381M883 411L855 401M870 381L883 411M870 381L905 394M905 394L883 411M905 394L910 428M905 394L923 375M935 407L905 394M923 375L935 407M923 375L948 387M948 387L935 407M948 387L959 432M948 387L948 368M960 406L948 387M948 368L960 406M845 411L846 435M845 411L861 425M861 425L846 435M861 425L858 451M861 425L883 411M884 442L861 425M883 411L884 442M883 411L910 428M910 428L884 442M910 428L914 460M910 428L935 407M940 446L910 428M935 407L940 446M935 407L959 432M959 432L940 446M959 432L960 470M959 432L960 406M967 452L959 432M845 411L845 411M845 411L847 435" stroke="url(#tg)" stroke-width="0.9" stroke-opacity="0.22" fill="none"/><path d="M846 435h0.1M858 451h0.1M884 442h0.1M914 460h0.1M940 446h0.1M960 470h0.1M845 459h0.1M857 475h0.1M883 472h0.1M909 498h0.1M940 485h0.1M960 519h0.1M839 482h0.1M848 500h0.1M879 499h0.1M902 535h0.1M935 532h0.1M950 563h0.1M964 544h0.1M829 502h0.1M834 522h0.1M869 529h0.1M886 563h0.1M925 570h0.1M933 599h0.1M814 523h0.1M819 542h0.1M849 555h0.1M860 597h0.1M900 605h0.1M899 638h0.1M798 538h0.1M798 559h0.1M830 577h0.1M831 615h0.1M870 631h0.1M866 664h0.1M776 553h0.1M774 576h0.1M798 597h0.1M802 633h0.1M837 656h0.1M826 689h0.1M851 684h0.1M756 563h0.1M745 584h0.1M770 612h0.1M763 648h0.1M798 671h0.1M786 703h0.1M732 570h0.1M718 588h0.1M742 619h0.1M728 654h0.1M759 684h0.1M735 718h0.1M705 571h0.1M695 588h0.1M711 621h0.1M695 657h0.1M717 696h0.1M693 719h0.1M681 569h0.1M668 584h0.1M677 620h0.1M659 652h0.1M673 690h0.1M644 709h0.1M656 562h0.1M641 576h0.1M645 606h0.1M624 637h0.1M634 678h0.1M607 693h0.1M637 554h0.1M619 560h0.1M621 594h0.1M592 611h0.1M594 655h0.1M571 665h0.1M615 538h0.1M599 546h0.1M593 576h0.1M569 590h0.1M562 627h0.1M538 635h0.1M600 524h0.1M583 524h0.1M575 553h0.1M543 560h0.1M537 597h0.1M511 596h0.1M519 621h0.1M583 503h0.1M567 502h0.1M555 527h0.1M527 531h0.1M516 567h0.1M490 561h0.1M494 584h0.1M573 480h0.1M558 479h0.1M544 501h0.1M516 501h0.1M497 528h0.1M475 519h0.1M476 545h0.1M568 460h0.1M555 448h0.1M535 470h0.1M508 467h0.1M487 486h0.1M469 472h0.1M565 438h0.1M554 425h0.1M533 441h0.1M513 428h0.1M485 447h0.1M471 431h0.1M464 452h0.1M568 412h0.1M561 399h0.1M537 414h0.1M517 392h0.1M492 410h0.1M478 392h0.1M574 389h0.1M568 376h0.1M541 384h0.1M525 362h0.1M497 374h0.1M490 343h0.1M583 369h0.1M578 354h0.1M557 353h0.1M540 323h0.1M513 330h0.1M504 305h0.1M597 350h0.1M598 329h0.1M569 326h0.1M562 293h0.1M531 295h0.1M528 262h0.1M616 333h0.1M617 316h0.1M588 303h0.1M587 270h0.1M555 256h0.1M559 230h0.1M535 242h0.1M634 321h0.1M644 301h0.1M616 284h0.1M622 249h0.1M587 234h0.1M598 203h0.1M660 309h0.1M665 293h0.1M645 270h0.1M658 234h0.1M628 211h0.1M644 187h0.1M681 304h0.1M694 289h0.1M676 264h0.1M696 232h0.1M674 204h0.1M689 185h0.1M707 302h0.1M723 288h0.1M709 265h0.1M733 239h0.1M716 208h0.1M736 191h0.1M728 303h0.1M750 294h0.1M743 267h0.1M768 251h0.1M753 214h0.1M782 211h0.1M763 194h0.1M756 310h0.1M770 303h0.1M770 277h0.1M795 264h0.1M794 238h0.1M819 229h0.1M805 214h0.1M776 319h0.1M793 315h0.1M799 295h0.1M827 288h0.1M825 254h0.1M857 256h0.1M840 237h0.1M797 334h0.1M815 332h0.1M818 312h0.1M850 304h0.1M858 277h0.1M888 284h0.1M873 263h0.1M815 351h0.1M832 354h0.1M842 334h0.1M873 332h0.1M884 304h0.1M912 315h0.1M827 368h0.1M847 378h0.1M860 359h0.1M893 365h0.1M908 336h0.1M934 354h0.1M838 389h0.1M855 401h0.1M870 381h0.1M905 394h0.1M923 375h0.1M948 387h0.1M948 368h0.1M845 411h0.1M861 425h0.1M883 411h0.1M910 428h0.1M935 407h0.1M959 432h0.1" stroke="#b8b0ff" stroke-width="1.6" stroke-linecap="round" stroke-opacity="0.35" fill="none"/></svg>
<svg class="a" style="left:0;top:0" width="1493" height="903">
<circle cx="707" cy="440" r="41" fill="none" stroke="#262640" stroke-width="1"/>
<path d="M707 426V454M693 440H721" stroke="#23233a" stroke-width="1"/>
<circle cx="404" cy="724" r="63.5" fill="#5a1e24"/>
<ellipse cx="404" cy="697.0" rx="6.5" ry="9.0" fill="#e84242" opacity="0.09"/>
<ellipse cx="404" cy="694.8" rx="5.7" ry="8.1" fill="#e84242" opacity="0.09"/>
<ellipse cx="404" cy="692.6" rx="4.9" ry="7.2" fill="#e84242" opacity="0.09"/>
<ellipse cx="404" cy="690.4" rx="4.1" ry="6.3" fill="#e84242" opacity="0.09"/>
<ellipse cx="404" cy="688.2" rx="3.3" ry="5.4" fill="#e84242" opacity="0.09"/>
<ellipse cx="404" cy="686.0" rx="2.5" ry="4.5" fill="#e84242" opacity="0.09"/>
<circle cx="606" cy="724" r="63.5" fill="#1f3a5e"/>
<ellipse cx="606" cy="697.0" rx="6.5" ry="9.0" fill="#4690e8" opacity="0.09"/>
<ellipse cx="606" cy="694.8" rx="5.7" ry="8.1" fill="#4690e8" opacity="0.09"/>
<ellipse cx="606" cy="692.6" rx="4.9" ry="7.2" fill="#4690e8" opacity="0.09"/>
<ellipse cx="606" cy="690.4" rx="4.1" ry="6.3" fill="#4690e8" opacity="0.09"/>
<ellipse cx="606" cy="688.2" rx="3.3" ry="5.4" fill="#4690e8" opacity="0.09"/>
<ellipse cx="606" cy="686.0" rx="2.5" ry="4.5" fill="#4690e8" opacity="0.09"/>
<circle cx="808" cy="724" r="63.5" fill="#1e4c33"/>
<ellipse cx="808" cy="697.0" rx="6.5" ry="9.0" fill="#3ec870" opacity="0.09"/>
<ellipse cx="808" cy="694.8" rx="5.7" ry="8.1" fill="#3ec870" opacity="0.09"/>
<ellipse cx="808" cy="692.6" rx="4.9" ry="7.2" fill="#3ec870" opacity="0.09"/>
<ellipse cx="808" cy="690.4" rx="4.1" ry="6.3" fill="#3ec870" opacity="0.09"/>
<ellipse cx="808" cy="688.2" rx="3.3" ry="5.4" fill="#3ec870" opacity="0.09"/>
<ellipse cx="808" cy="686.0" rx="2.5" ry="4.5" fill="#3ec870" opacity="0.09"/>
<circle cx="1011" cy="724" r="63.5" fill="#5a4b22"/>
<ellipse cx="1011" cy="697.0" rx="6.5" ry="9.0" fill="#e8c83e" opacity="0.09"/>
<ellipse cx="1011" cy="694.8" rx="5.7" ry="8.1" fill="#e8c83e" opacity="0.09"/>
<ellipse cx="1011" cy="692.6" rx="4.9" ry="7.2" fill="#e8c83e" opacity="0.09"/>
<ellipse cx="1011" cy="690.4" rx="4.1" ry="6.3" fill="#e8c83e" opacity="0.09"/>
<ellipse cx="1011" cy="688.2" rx="3.3" ry="5.4" fill="#e8c83e" opacity="0.09"/>
<ellipse cx="1011" cy="686.0" rx="2.5" ry="4.5" fill="#e8c83e" opacity="0.09"/>
</svg>
<svg class="a" style="left:0;top:0" width="1493" height="903"><defs><linearGradient id="tg" gradientUnits="userSpaceOnUse" x1="0" y1="177" x2="0" y2="730"><stop offset="0" stop-color="#9062ec" stop-opacity="0.9"/><stop offset="0.38" stop-color="#7468d8" stop-opacity="0.7"/><stop offset="0.6" stop-color="#7290dc" stop-opacity="0.8"/><stop offset="1" stop-color="#a8ccf8" stop-opacity="1"/></linearGradient><filter id="glow" x="-10%" y="-10%" width="120%" height="120%"><feGaussianBlur stdDeviation="1.5"/></filter></defs><path d="M967.2 453.0L967.8 459.6L968.2 466.3L968.6 473.0L968.8 479.7L968.9 486.4L968.9 493.2L968.7 500.0L968.4 506.9L967.9 513.7L967.3 520.6L966.4 527.5L965.4 534.4L964.1 541.3L962.6 548.1L960.9 554.9L959.0 561.7L956.8 568.4L954.4 575.0L951.7 581.6L948.7 588.1L945.6 594.4L942.1 600.6L938.5 606.7L934.6 612.7L930.4 618.5L926.1 624.1L921.5 629.6L916.7 634.9L911.8 640.0L906.7 644.9L901.4 649.7L896.0 654.3L890.4 658.7L884.7 663.0L879.0 667.1L873.1 671.0L867.1 674.8L861.1 678.5L855.0 682.0L848.9 685.5L842.6 688.8L836.4 692.0L830.1 695.0L823.7 698.0L817.3 700.9L810.8 703.7L804.3 706.4L797.7 709.0L791.0 711.4L784.3 713.8L777.6 716.0L770.8 718.1L763.9 720.0L756.9 721.8L749.9 723.4L742.9 724.8L735.8 726.0L728.6 726.9L721.4 727.7L714.2 728.2L706.9 728.4L699.7 728.4L692.4 728.1L685.2 727.6L678.0 726.7L670.8 725.6L663.7 724.2L656.6 722.5L649.6 720.5L642.7 718.3L635.9 715.8L629.3 713.0L622.7 710.0L616.2 706.8L609.9 703.3L603.7 699.7L597.6 695.8L591.7 691.8L585.9 687.7L580.3 683.4L574.8 679.0L569.4 674.4L564.1 669.8L559.0 665.0L553.9 660.2L549.0 655.3L544.2 650.3L539.5 645.2L534.9 640.1L530.4 634.9L526.1 629.7L521.8 624.4L517.6 619.0L513.5 613.5L509.6 608.0L505.7 602.4L502.0 596.7L498.5 591.0L495.0 585.1L491.7 579.2L488.6 573.2L485.6 567.2L482.8 561.0L480.1 554.8L477.7 548.5L475.4 542.2L473.3 535.7L471.4 529.3L469.8 522.8L468.3 516.2L467.0 509.6L465.9 503.0L465.0 496.3L464.3 489.6L463.8 483.0L463.5 476.3L463.3 469.6L463.3 463.0L463.5 456.3L463.8 449.7L464.2 443.1L464.8 436.5L465.5 429.9L466.2 423.3L467.1 416.8L468.1 410.2L469.2 403.7L470.3 397.2L471.6 390.7L472.9 384.1L474.3 377.6L475.8 371.1L477.4 364.6L479.1 358.0L480.9 351.5L482.7 345.0L484.7 338.4L486.8 331.8L489.1 325.3L491.5 318.7L494.0 312.2L496.7 305.7L499.6 299.2L502.6 292.8L505.8 286.4L509.2 280.0L512.8 273.7L516.6 267.6L520.7 261.5L524.9 255.5L529.3 249.7L534.0 244.0L538.8 238.4L543.9 233.0L549.2 227.8L554.7 222.8L560.4 218.0L566.2 213.4L572.3 209.1L578.5 204.9L584.9 201.1L591.5 197.5L598.2 194.1L605.0 191.1L611.9 188.3L619.0 185.8L626.1 183.6L633.3 181.7L640.6 180.0L648.0 178.7L655.3 177.7L662.7 176.9L670.1 176.4L677.6 176.3L685.0 176.4L692.3 176.7L699.7 177.3L707.0 178.2L714.2 179.4L721.4 180.7L728.5 182.3L735.5 184.1L742.4 186.1L749.2 188.3L756.0 190.7L762.6 193.2L769.1 195.9L775.5 198.8L781.9 201.7L788.1 204.8L794.2 208.0L800.2 211.3L806.1 214.7L811.9 218.2L817.6 221.7L823.3 225.3L828.8 229.0L834.3 232.8L839.7 236.6L845.0 240.5L850.2 244.4L855.4 248.4L860.5 252.5L865.5 256.6L870.5 260.8L875.3 265.1L880.1 269.4L884.8 273.9L889.4 278.4L894.0 283.0L898.4 287.8L902.7 292.6L906.9 297.5L911.0 302.5L915.0 307.6L918.8 312.9L922.5 318.2L926.1 323.6L929.5 329.1L932.7 334.7L935.9 340.4L938.8 346.2L941.6 352.1L944.2 358.0L946.7 364.0L949.0 370.1L951.2 376.2L953.2 382.4L955.1 388.6L956.9 394.9L958.5 401.2L960.0 407.6L961.3 414.0L962.6 420.4L963.7 426.9L964.7 433.3L965.7 439.9L966.5 446.4L967.2 453.0Z" stroke="url(#tg)" stroke-width="2.5" stroke-opacity="0.22" fill="none" filter="url(#glow)"/><path d="M845.0 436.0L845.0 439.5L844.8 443.0L844.6 446.5L844.2 450.0L843.8 453.4L843.3 456.9L842.7 460.3L841.9 463.8L841.1 467.2L840.2 470.6L839.2 473.9L838.1 477.3L837.0 480.6L835.7 483.9L834.3 487.1L832.9 490.3L831.3 493.5L829.7 496.6L828.0 499.7L826.2 502.8L824.3 505.8L822.4 508.7L820.4 511.6L818.2 514.5L816.0 517.3L813.8 520.0L811.4 522.7L809.0 525.3L806.5 527.9L804.0 530.4L801.3 532.8L798.6 535.1L795.9 537.4L793.1 539.7L790.2 541.8L787.3 543.9L784.3 545.9L781.2 547.8L778.1 549.7L775.0 551.5L771.8 553.2L768.5 554.8L765.2 556.3L761.9 557.8L758.6 559.1L755.2 560.4L751.7 561.6L748.3 562.7L744.8 563.7L741.2 564.7L737.7 565.5L734.1 566.2L730.5 566.9L726.9 567.5L723.3 568.0L719.7 568.4L716.0 568.7L712.4 568.9L708.7 569.0L705.1 569.0L701.4 568.9L697.8 568.8L694.1 568.5L690.5 568.2L686.9 567.7L683.3 567.2L679.7 566.6L676.1 565.9L672.5 565.1L669.0 564.2L665.5 563.2L662.0 562.2L658.6 561.0L655.1 559.8L651.8 558.5L648.4 557.0L645.1 555.6L641.8 554.0L638.6 552.3L635.4 550.6L632.3 548.8L629.3 546.9L626.2 544.9L623.3 542.9L620.4 540.8L617.5 538.6L614.7 536.3L612.0 534.0L609.3 531.6L606.7 529.1L604.2 526.6L601.8 524.0L599.4 521.3L597.1 518.6L594.8 515.9L592.7 513.0L590.6 510.2L588.6 507.2L586.7 504.3L584.9 501.2L583.1 498.2L581.5 495.1L579.9 491.9L578.4 488.7L577.0 485.5L575.7 482.2L574.4 478.9L573.3 475.6L572.3 472.2L571.3 468.9L570.5 465.5L569.7 462.1L569.0 458.6L568.5 455.2L568.0 451.7L567.6 448.2L567.3 444.7L567.1 441.2L567.0 437.7L567.0 434.3L567.1 430.8L567.3 427.3L567.6 423.8L568.0 420.3L568.5 416.8L569.0 413.4L569.7 409.9L570.5 406.5L571.3 403.1L572.3 399.8L573.3 396.4L574.4 393.1L575.7 389.8L577.0 386.5L578.4 383.3L579.9 380.1L581.5 376.9L583.1 373.8L584.9 370.8L586.7 367.7L588.6 364.8L590.6 361.8L592.7 359.0L594.8 356.1L597.1 353.4L599.4 350.7L601.8 348.0L604.2 345.4L606.7 342.9L609.3 340.4L612.0 338.0L614.7 335.7L617.5 333.4L620.4 331.2L623.3 329.1L626.2 327.1L629.3 325.1L632.3 323.2L635.4 321.4L638.6 319.7L641.8 318.0L645.1 316.4L648.4 315.0L651.8 313.5L655.1 312.2L658.6 311.0L662.0 309.8L665.5 308.8L669.0 307.8L672.5 306.9L676.1 306.1L679.7 305.4L683.3 304.8L686.9 304.3L690.5 303.8L694.1 303.5L697.8 303.2L701.4 303.1L705.1 303.0L708.7 303.0L712.4 303.1L716.0 303.3L719.7 303.6L723.3 304.0L726.9 304.5L730.5 305.1L734.1 305.8L737.7 306.5L741.2 307.3L744.8 308.3L748.3 309.3L751.7 310.4L755.2 311.6L758.6 312.9L761.9 314.2L765.2 315.7L768.5 317.2L771.8 318.8L775.0 320.5L778.1 322.3L781.2 324.2L784.3 326.1L787.3 328.1L790.2 330.2L793.1 332.3L795.9 334.6L798.6 336.9L801.3 339.2L804.0 341.6L806.5 344.1L809.0 346.7L811.4 349.3L813.8 352.0L816.0 354.7L818.2 357.5L820.4 360.4L822.4 363.3L824.3 366.2L826.2 369.2L828.0 372.3L829.7 375.4L831.3 378.5L832.9 381.7L834.3 384.9L835.7 388.1L837.0 391.4L838.1 394.7L839.2 398.1L840.2 401.4L841.1 404.8L841.9 408.2L842.7 411.7L843.3 415.1L843.8 418.6L844.2 422.0L844.6 425.5L844.8 429.0L845.0 432.5L845.0 436.0Z" stroke="url(#tg)" stroke-width="2" stroke-opacity="0.06" fill="none" filter="url(#glow)"/><path d="M967 452L969 496M967 452L962 470M962 470L969 496M962 470L961 517M962 470L939 450M941 491L962 470M939 450L941 491M939 450L915 464M915 464L941 491M915 464L911 496M915 464L887 445M881 471L915 464M887 445L881 471M887 445L861 453M861 453L881 471M861 453L857 478M861 453L847 435M845 462L861 453M847 435L845 462M847 435L846 435M846 435L845 462M969 496L964 544M969 496L961 517M961 517L964 544M961 517L948 564M961 517L941 491M935 529L961 517M941 491L935 529M941 491L911 496M911 496L935 529M911 496L902 530M911 496L881 471M875 501L911 496M881 471L875 501M881 471L857 478M857 478L875 501M857 478L848 504M857 478L845 462M838 482L857 478M845 462L838 482M845 462L845 459M964 544L949 588M964 544L948 564M948 564L949 588M948 564L928 604M948 564L935 529M924 568L948 564M935 529L924 568M935 529L902 530M902 530L924 568M902 530L884 563M902 530L875 501M867 534L902 530M875 501L867 534M875 501L848 504M848 504L867 534M848 504L837 524M848 504L838 482M829 503L848 504M838 482L829 503M949 588L921 630M949 588L928 604M928 604L921 630M928 604L898 639M928 604L924 568M901 604L928 604M924 568L901 604M924 568L884 563M884 563L901 604M884 563L863 591M884 563L867 534M852 556L884 563M867 534L852 556M867 534L837 524M837 524L852 556M837 524L820 545M837 524L829 503M815 523L837 524M829 503L815 523M829 503L829 502M829 502L815 523M921 630L887 661M921 630L898 639M898 639L887 661M898 639L866 666M898 639L901 604M873 633L898 639M901 604L873 633M901 604L863 591M863 591L873 633M863 591L835 617M863 591L852 556M825 580L863 591M852 556L825 580M852 556L820 545M820 545L825 580M820 545L797 558M820 545L815 523M797 540L820 545M815 523L797 540M815 523L814 523M814 523L797 540M887 661L851 684M887 661L866 666M866 666L851 684M866 666L822 687M866 666L873 633M830 656L866 666M873 633L830 656M873 633L835 617M835 617L830 656M835 617L798 634M835 617L825 580M801 593L835 617M825 580L801 593M825 580L797 558M797 558L801 593M797 558L775 576M797 558L797 540M779 552L797 558M797 540L779 552M797 540L798 538M798 538L779 552M851 684L807 705M851 684L822 687M822 687L807 705M822 687L780 706M822 687L830 656M794 673L822 687M830 656L794 673M830 656L798 634M798 634L794 673M798 634L769 646M798 634L801 593M768 607L798 634M801 593L768 607M801 593L775 576M775 576L768 607M775 576L746 584M775 576L779 552M756 562L775 576M779 552L756 562M779 552L776 553M776 553L756 562M807 705L766 719M807 705L780 706M780 706L766 719M780 706L734 716M780 706L794 673M757 687L780 706M794 673L757 687M794 673L769 646M769 646L757 687M769 646L734 660M769 646L768 607M738 616L769 646M768 607L738 616M768 607L746 584M746 584L738 616M746 584L720 586M746 584L756 562M731 569L746 584M756 562L731 569M766 719L715 728M766 719L734 716M734 716L715 728M734 716L693 717M734 716L757 687M714 694L734 716M757 687L714 694M757 687L734 660M734 660L714 694M734 660L693 662M734 660L738 616M710 623L734 660M738 616L710 623M738 616L720 586M720 586L710 623M720 586L696 587M720 586L731 569M708 571L720 586M731 569L708 571M715 728L667 725M715 728L693 717M693 717L667 725M693 717L643 709M693 717L714 694M670 691L693 717M714 694L670 691M714 694L693 662M693 662L670 691M693 662L656 650M693 662L710 623M678 618L693 662M710 623L678 618M710 623L696 587M696 587L678 618M696 587L667 582M696 587L708 571M681 568L696 587M708 571L681 568M708 571L705 571M667 725L620 709M667 725L643 709M643 709L620 709M643 709L607 691M643 709L670 691M629 679L643 709M670 691L629 679M670 691L656 650M656 650L629 679M656 650L620 631M656 650L678 618M649 607L656 650M678 618L649 607M678 618L667 582M667 582L649 607M667 582L642 575M667 582L681 568M656 562L667 582M681 568L656 562M620 709L581 684M620 709L607 691M607 691L581 684M607 691L571 664M607 691L629 679M593 652L607 691M629 679L593 652M629 679L620 631M620 631L593 652M620 631L593 618M620 631L649 607M622 594L620 631M649 607L622 594M649 607L642 575M642 575L622 594M642 575L619 563M642 575L656 562M636 553L642 575M656 562L636 553M581 684L547 653M581 684L571 664M571 664L547 653M571 664L539 633M571 664L593 652M566 630L571 664M593 652L566 630M593 652L593 618M593 618L566 630M593 618L565 591M593 618L622 594M595 573L593 618M622 594L595 573M622 594L619 563M619 563L595 573M619 563L598 546M619 563L636 553M615 540L619 563M636 553L615 540M637 554L615 540M547 653L539 633M539 633L519 621M539 633L509 594M539 633L566 630M537 600L539 633M566 630L537 600M566 630L565 591M565 591L537 600M565 591L540 561M565 591L595 573M572 552L565 591M595 573L572 552M595 573L598 546M598 546L572 552M598 546L582 523M598 546L615 540M599 523L598 546M615 540L599 523M615 540L615 538M615 538L599 523M519 621L509 594M509 594L494 584M509 594L491 560M509 594L537 600M512 561L509 594M537 600L512 561M537 600L540 561M540 561L512 561M540 561L525 533M540 561L572 552M556 529L540 561M572 552L556 529M572 552L582 523M582 523L556 529M582 523L568 503M582 523L599 523M585 504L582 523M599 523L585 504M599 523L600 524M494 584L491 560M491 560L476 545M491 560L475 520M491 560L512 561M496 533L491 560M512 561L496 533M512 561L525 533M525 533L496 533M525 533L513 500M525 533L556 529M543 500L525 533M556 529L543 500M556 529L568 503M568 503L543 500M568 503L559 475M568 503L585 504M574 481L568 503M585 504L574 481M476 545L475 520M475 520L466 500M475 520L470 473M475 520L496 533M489 486L475 520M496 533L489 486M496 533L513 500M513 500L489 486M513 500L511 462M513 500L543 500M536 470L513 500M543 500L536 470M543 500L559 475M559 475L536 470M559 475L553 453M559 475L574 481M568 461L559 475M574 481L568 461M573 480L568 461M466 500L470 473M470 473L464 452M470 473L471 429M470 473L489 486M485 453L470 473M489 486L485 453M489 486L511 462M511 462L485 453M511 462L509 427M511 462L536 470M536 440L511 462M536 470L536 440M536 470L553 453M553 453L536 440M553 453L554 425M553 453L568 461M566 436L553 453M568 461L566 436M568 461L568 460M464 452L471 429M471 429L468 408M471 429L478 387M471 429L485 453M490 410L471 429M485 453L490 410M485 453L509 427M509 427L490 410M509 427L514 394M509 427L536 440M536 409L509 427M536 440L536 409M536 440L554 425M554 425L536 409M554 425L561 398M554 425L566 436M567 415L554 425M566 436L567 415M468 408L478 363M468 408L478 387M478 387L478 363M478 387L490 343M478 387L490 410M499 374L478 387M490 410L499 374M490 410L514 394M514 394L499 374M514 394L523 359M514 394L536 409M543 385L514 394M536 409L543 385M536 409L561 398M561 398L543 385M561 398L567 375M561 398L567 415M573 392L561 398M567 415L573 392M568 412L573 392M478 363L492 318M478 363L490 343M490 343L492 318M490 343L503 305M490 343L499 374M508 334L490 343M499 374L508 334M499 374L523 359M523 359L508 334M523 359L540 330M523 359L543 385M556 356L523 359M543 385L556 356M543 385L567 375M567 375L556 356M567 375L579 353M567 375L573 392M584 369L567 375M573 392L584 369M492 318L511 278M492 318L503 305M503 305L511 278M503 305L525 265M503 305L508 334M529 291L503 305M508 334L529 291M508 334L540 330M540 330L529 291M540 330L559 295M540 330L556 356M571 329L540 330M556 356L571 329M556 356L579 353M579 353L571 329M579 353L598 329M579 353L584 369M598 349L579 353M584 369L598 349M511 278L525 265M525 265L535 242M525 265L557 229M525 265L529 291M552 261L525 265M529 291L552 261M529 291L559 295M559 295L552 261M559 295L588 270M559 295L571 329M592 302L559 295M571 329L592 302M571 329L598 329M598 329L592 302M598 329L617 314M598 329L598 349M615 333L598 329M598 349L615 333M535 242L557 229M557 229L578 205M557 229L601 199M557 229L552 261M585 235L557 229M552 261L585 235M552 261L588 270M588 270L585 235M588 270L621 247M588 270L592 302M616 281L588 270M592 302L616 281M592 302L617 314M617 314L616 281M617 314L641 302M617 314L615 333M637 319L617 314M615 333L637 319M615 333L616 333M578 205L614 187M578 205L601 199M601 199L614 187M601 199L642 189M601 199L585 235M628 212L601 199M585 235L628 212M585 235L621 247M621 247L628 212M621 247L652 235M621 247L616 281M647 271L621 247M616 281L647 271M616 281L641 302M641 302L647 271M641 302L664 290M641 302L637 319M658 309L641 302M637 319L658 309M634 321L658 309M614 187L672 176M614 187L642 189M642 189L672 176M642 189L690 183M642 189L628 212M671 205L642 189M628 212L671 205M628 212L652 235M652 235L671 205M652 235L692 231M652 235L647 271M678 266L652 235M647 271L678 266M647 271L664 290M664 290L678 266M664 290L692 286M664 290L658 309M681 303L664 290M658 309L681 303M658 309L660 309M660 309L681 303M672 176L714 179M672 176L690 183M690 183L714 179M690 183L738 191M690 183L671 205M712 206L690 183M671 205L712 206M671 205L692 231M692 231L712 206M692 231L731 240M692 231L678 266M707 262L692 231M678 266L707 262M678 266L692 286M692 286L707 262M692 286L719 290M692 286L681 303M704 301L692 286M681 303L704 301M681 303L681 304M681 304L704 301M714 179L763 194M714 179L738 191M738 191L763 194M738 191L780 208M738 191L712 206M753 214L738 191M712 206L753 214M712 206L731 240M731 240L753 214M731 240L764 247M731 240L707 262M744 268L731 240M707 262L744 268M707 262L719 290M719 290L744 268M719 290L750 294M719 290L704 301M730 304L719 290M704 301L730 304M704 301L707 302M763 194L780 208M780 208L805 214M780 208L816 227M780 208L753 214M796 235L780 208M753 214L796 235M753 214L764 247M764 247L796 235M764 247L797 267M764 247L744 268M769 278L764 247M744 268L769 278M744 268L750 294M750 294L769 278M750 294L774 305M750 294L730 304M753 309L750 294M730 304L753 309M805 214L816 227M816 227L840 237M816 227L853 254M816 227L796 235M830 256L816 227M796 235L830 256M796 235L797 267M797 267L830 256M797 267L827 286M797 267L769 278M797 296L797 267M769 278L797 296M769 278L774 305M774 305L797 296M774 305L796 317M774 305L753 309M776 319L774 305M753 309L776 319M756 310L776 319M840 237L853 254M853 254L873 263M853 254L883 280M853 254L830 256M859 280L853 254M830 256L859 280M830 256L827 286M827 286L859 280M827 286L851 305M827 286L797 296M821 313L827 286M797 296L821 313M797 296L796 317M796 317L821 313M796 317L815 336M796 317L776 319M797 333L796 317M776 319L797 333M776 319L776 319M776 319L797 333M873 263L904 294M873 263L883 280M883 280L904 294M883 280L913 314M883 280L859 280M886 309L883 280M859 280L886 309M859 280L851 305M851 305L886 309M851 305L879 335M851 305L821 313M841 333L851 305M821 313L841 333M821 313L815 336M815 336L841 333M815 336L832 356M815 336L797 333M813 348L815 336M797 333L813 348M797 333L797 334M797 334L813 348M904 294L930 330M904 294L913 314M913 314L930 330M913 314L933 348M913 314L886 309M907 335L913 314M886 309L907 335M886 309L879 335M879 335L907 335M879 335L891 361M879 335L841 333M862 357L879 335M841 333L862 357M841 333L832 356M832 356L862 357M832 356L845 373M832 356L813 348M829 369L832 356M813 348L829 369M813 348L815 351M815 351L829 369M930 330L933 348M933 348L948 368M933 348L947 388M933 348L907 335M923 372L933 348M907 335L923 372M907 335L891 361M891 361L923 372M891 361L905 393M891 361L862 357M871 386L891 361M862 357L871 386M862 357L845 373M845 373L871 386M845 373L856 399M845 373L829 369M839 391L845 373M829 369L839 391M829 369L827 368M827 368L839 391M948 368L947 388M947 388L960 406M947 388L957 430M947 388L923 372M936 408L947 388M923 372L936 408M923 372L905 393M905 393L936 408M905 393L909 428M905 393L871 386M880 410L905 393M871 386L880 410M871 386L856 399M856 399L880 410M856 399L858 427M856 399L839 391M845 411L856 399M839 391L845 411M839 391L838 389M838 389L845 411M960 406L967 452M960 406L957 430M957 430L967 452M957 430L962 470M957 430L936 408M939 450L957 430M936 408L939 450M936 408L909 428M909 428L939 450M909 428L915 464M909 428L880 410M887 445L909 428M880 410L887 445M880 410L858 427M858 427L887 445M858 427L861 453M858 427L845 411M847 435L858 427M845 411L847 435" stroke="url(#tg)" stroke-width="0.8" stroke-opacity="0.099" fill="none"/><path d="M846 435L845 459M846 435L858 451M858 451L845 459M858 451L857 475M858 451L884 442M883 472L858 451M884 442L883 472M884 442L914 460M914 460L883 472M914 460L909 498M914 460L940 446M940 485L914 460M940 446L940 485M940 446L960 470M960 470L940 485M960 470L960 519M960 470L967 452M969 496L960 470M845 459L839 482M845 459L857 475M857 475L839 482M857 475L848 500M857 475L883 472M879 499L857 475M883 472L879 499M883 472L909 498M909 498L879 499M909 498L902 535M909 498L940 485M935 532L909 498M940 485L935 532M940 485L960 519M960 519L935 532M960 519L950 563M960 519L969 496M964 544L960 519M845 459L838 482M839 482L829 502M839 482L848 500M848 500L829 502M848 500L834 522M848 500L879 499M869 529L848 500M879 499L869 529M879 499L902 535M902 535L869 529M902 535L886 563M902 535L935 532M925 570L902 535M935 532L925 570M935 532L950 563M950 563L925 570M950 563L933 599M950 563L964 544M949 588L950 563M838 482L839 482M839 482L829 503M829 502L814 523M829 502L834 522M834 522L814 523M834 522L819 542M834 522L869 529M849 555L834 522M869 529L849 555M869 529L886 563M886 563L849 555M886 563L860 597M886 563L925 570M900 605L886 563M925 570L900 605M925 570L933 599M933 599L900 605M933 599L899 638M933 599L949 588M921 630L933 599M814 523L798 538M814 523L819 542M819 542L798 538M819 542L798 559M819 542L849 555M830 577L819 542M849 555L830 577M849 555L860 597M860 597L830 577M860 597L831 615M860 597L900 605M870 631L860 597M900 605L870 631M900 605L899 638M899 638L870 631M899 638L866 664M899 638L921 630M887 661L899 638M798 538L776 553M798 538L798 559M798 559L776 553M798 559L774 576M798 559L830 577M798 597L798 559M830 577L798 597M830 577L831 615M831 615L798 597M831 615L802 633M831 615L870 631M837 656L831 615M870 631L837 656M870 631L866 664M866 664L837 656M866 664L826 689M866 664L887 661M851 684L866 664M776 553L756 563M776 553L774 576M774 576L756 563M774 576L745 584M774 576L798 597M770 612L774 576M798 597L770 612M798 597L802 633M802 633L770 612M802 633L763 648M802 633L837 656M798 671L802 633M837 656L798 671M837 656L826 689M826 689L798 671M826 689L786 703M826 689L851 684M807 705L826 689M756 563L732 570M756 563L745 584M745 584L732 570M745 584L718 588M745 584L770 612M742 619L745 584M770 612L742 619M770 612L763 648M763 648L742 619M763 648L728 654M763 648L798 671M759 684L763 648M798 671L759 684M798 671L786 703M786 703L759 684M786 703L735 718M786 703L807 705M766 719L786 703M756 562L756 563M756 563L731 569M732 570L705 571M732 570L718 588M718 588L705 571M718 588L695 588M718 588L742 619M711 621L718 588M742 619L711 621M742 619L728 654M728 654L711 621M728 654L695 657M728 654L759 684M717 696L728 654M759 684L717 696M759 684L735 718M735 718L717 696M735 718L693 719M735 718L766 719M715 728L735 718M731 569L732 570M732 570L708 571M705 571L681 569M705 571L695 588M695 588L681 569M695 588L668 584M695 588L711 621M677 620L695 588M711 621L677 620M711 621L695 657M695 657L677 620M695 657L659 652M695 657L717 696M673 690L695 657M717 696L673 690M717 696L693 719M693 719L673 690M693 719L644 709M693 719L715 728M667 725L693 719M705 571L681 568M681 569L656 562M681 569L668 584M668 584L656 562M668 584L641 576M668 584L677 620M645 606L668 584M677 620L645 606M677 620L659 652M659 652L645 606M659 652L624 637M659 652L673 690M634 678L659 652M673 690L634 678M673 690L644 709M644 709L634 678M644 709L607 693M644 709L667 725M620 709L644 709M681 568L681 569M681 569L656 562M656 562L637 554M656 562L641 576M641 576L637 554M641 576L619 560M641 576L645 606M621 594L641 576M645 606L621 594M645 606L624 637M624 637L621 594M624 637L592 611M624 637L634 678M594 655L624 637M634 678L594 655M634 678L607 693M607 693L594 655M607 693L571 665M607 693L620 709M581 684L607 693M656 562L656 562M656 562L636 553M637 554L615 538M637 554L619 560M619 560L615 538M619 560L599 546M619 560L621 594M593 576L619 560M621 594L593 576M621 594L592 611M592 611L593 576M592 611L569 590M592 611L594 655M562 627L592 611M594 655L562 627M594 655L571 665M571 665L562 627M571 665L538 635M571 665L581 684M547 653L571 665M636 553L637 554M615 538L600 524M615 538L599 546M599 546L600 524M599 546L583 524M599 546L593 576M575 553L599 546M593 576L575 553M593 576L569 590M569 590L575 553M569 590L543 560M569 590L562 627M537 597L569 590M562 627L537 597M562 627L538 635M538 635L537 597M538 635L511 596M538 635L547 653M519 621L538 635M547 653L519 621M600 524L583 503M600 524L583 524M583 524L583 503M583 524L567 502M583 524L575 553M555 527L583 524M575 553L555 527M575 553L543 560M543 560L555 527M543 560L527 531M543 560L537 597M516 567L543 560M537 597L516 567M537 597L511 596M511 596L516 567M511 596L490 561M511 596L519 621M494 584L511 596M519 621L494 584M600 524L585 504M583 503L573 480M583 503L567 502M567 502L573 480M567 502L558 479M567 502L555 527M544 501L567 502M555 527L544 501M555 527L527 531M527 531L544 501M527 531L516 501M527 531L516 567M497 528L527 531M516 567L497 528M516 567L490 561M490 561L497 528M490 561L475 519M490 561L494 584M476 545L490 561M494 584L476 545M585 504L583 503M583 503L574 481M573 480L568 460M573 480L558 479M558 479L568 460M558 479L555 448M558 479L544 501M535 470L558 479M544 501L535 470M544 501L516 501M516 501L535 470M516 501L508 467M516 501L497 528M487 486L516 501M497 528L487 486M497 528L475 519M475 519L487 486M475 519L469 472M475 519L476 545M466 500L475 519M476 545L466 500M574 481L573 480M568 460L565 438M568 460L555 448M555 448L565 438M555 448L554 425M555 448L535 470M533 441L555 448M535 470L533 441M535 470L508 467M508 467L533 441M508 467L513 428M508 467L487 486M485 447L508 467M487 486L485 447M487 486L469 472M469 472L485 447M469 472L471 431M469 472L466 500M464 452L469 472M466 500L464 452M568 460L566 436M565 438L568 412M565 438L554 425M554 425L568 412M554 425L561 399M554 425L533 441M537 414L554 425M533 441L537 414M533 441L513 428M513 428L537 414M513 428L517 392M513 428L485 447M492 410L513 428M485 447L492 410M485 447L471 431M471 431L492 410M471 431L478 392M471 431L464 452M468 408L471 431M464 452L468 408M566 436L565 438M565 438L567 415M568 412L574 389M568 412L561 399M561 399L574 389M561 399L568 376M561 399L537 414M541 384L561 399M537 414L541 384M537 414L517 392M517 392L541 384M517 392L525 362M517 392L492 410M497 374L517 392M492 410L497 374M492 410L478 392M478 392L497 374M478 392L490 343M478 392L468 408M478 363L478 392M567 415L568 412M574 389L583 369M574 389L568 376M568 376L583 369M568 376L578 354M568 376L541 384M557 353L568 376M541 384L557 353M541 384L525 362M525 362L557 353M525 362L540 323M525 362L497 374M513 330L525 362M497 374L513 330M497 374L490 343M490 343L513 330M490 343L504 305M490 343L478 363M492 318L490 343M573 392L574 389M574 389L584 369M583 369L597 350M583 369L578 354M578 354L597 350M578 354L598 329M578 354L557 353M569 326L578 354M557 353L569 326M557 353L540 323M540 323L569 326M540 323L562 293M540 323L513 330M531 295L540 323M513 330L531 295M513 330L504 305M504 305L531 295M504 305L528 262M504 305L492 318M511 278L504 305M584 369L583 369M583 369L598 349M597 350L616 333M597 350L598 329M598 329L616 333M598 329L617 316M598 329L569 326M588 303L598 329M569 326L588 303M569 326L562 293M562 293L588 303M562 293L587 270M562 293L531 295M555 256L562 293M531 295L555 256M531 295L528 262M528 262L555 256M528 262L559 230M528 262L511 278M535 242L528 262M511 278L535 242M598 349L597 350M597 350L615 333M616 333L634 321M616 333L617 316M617 316L634 321M617 316L644 301M617 316L588 303M616 284L617 316M588 303L616 284M588 303L587 270M587 270L616 284M587 270L622 249M587 270L555 256M587 234L587 270M555 256L587 234M555 256L559 230M559 230L587 234M559 230L598 203M559 230L535 242M578 205L559 230M535 242L578 205M616 333L637 319M634 321L660 309M634 321L644 301M644 301L660 309M644 301L665 293M644 301L616 284M645 270L644 301M616 284L645 270M616 284L622 249M622 249L645 270M622 249L658 234M622 249L587 234M628 211L622 249M587 234L628 211M587 234L598 203M598 203L628 211M598 203L644 187M598 203L578 205M614 187L598 203M637 319L634 321M660 309L681 304M660 309L665 293M665 293L681 304M665 293L694 289M665 293L645 270M676 264L665 293M645 270L676 264M645 270L658 234M658 234L676 264M658 234L696 232M658 234L628 211M674 204L658 234M628 211L674 204M628 211L644 187M644 187L674 204M644 187L689 185M644 187L614 187M672 176L644 187M681 304L707 302M681 304L694 289M694 289L707 302M694 289L723 288M694 289L676 264M709 265L694 289M676 264L709 265M676 264L696 232M696 232L709 265M696 232L733 239M696 232L674 204M716 208L696 232M674 204L716 208M674 204L689 185M689 185L716 208M689 185L736 191M689 185L672 176M714 179L689 185M707 302L728 303M707 302L723 288M723 288L728 303M723 288L750 294M723 288L709 265M743 267L723 288M709 265L743 267M709 265L733 239M733 239L743 267M733 239L768 251M733 239L716 208M753 214L733 239M716 208L753 214M716 208L736 191M736 191L753 214M736 191L782 211M736 191L714 179M763 194L736 191M707 302L730 304M728 303L756 310M728 303L750 294M750 294L756 310M750 294L770 303M750 294L743 267M770 277L750 294M743 267L770 277M743 267L768 251M768 251L770 277M768 251L795 264M768 251L753 214M794 238L768 251M753 214L794 238M753 214L782 211M782 211L794 238M782 211L819 229M782 211L763 194M805 214L782 211M763 194L805 214M730 304L728 303M728 303L753 309M756 310L776 319M756 310L770 303M770 303L776 319M770 303L793 315M770 303L770 277M799 295L770 303M770 277L799 295M770 277L795 264M795 264L799 295M795 264L827 288M795 264L794 238M825 254L795 264M794 238L825 254M794 238L819 229M819 229L825 254M819 229L857 256M819 229L805 214M840 237L819 229M805 214L840 237M753 309L756 310M776 319L797 334M776 319L793 315M793 315L797 334M793 315L815 332M793 315L799 295M818 312L793 315M799 295L818 312M799 295L827 288M827 288L818 312M827 288L850 304M827 288L825 254M858 277L827 288M825 254L858 277M825 254L857 256M857 256L858 277M857 256L888 284M857 256L840 237M873 263L857 256M840 237L873 263M797 334L815 351M797 334L815 332M815 332L815 351M815 332L832 354M815 332L818 312M842 334L815 332M818 312L842 334M818 312L850 304M850 304L842 334M850 304L873 332M850 304L858 277M884 304L850 304M858 277L884 304M858 277L888 284M888 284L884 304M888 284L912 315M888 284L873 263M904 294L888 284M815 351L827 368M815 351L832 354M832 354L827 368M832 354L847 378M832 354L842 334M860 359L832 354M842 334L860 359M842 334L873 332M873 332L860 359M873 332L893 365M873 332L884 304M908 336L873 332M884 304L908 336M884 304L912 315M912 315L908 336M912 315L934 354M912 315L904 294M930 330L912 315M827 368L838 389M827 368L847 378M847 378L838 389M847 378L855 401M847 378L860 359M870 381L847 378M860 359L870 381M860 359L893 365M893 365L870 381M893 365L905 394M893 365L908 336M923 375L893 365M908 336L923 375M908 336L934 354M934 354L923 375M934 354L948 387M934 354L930 330M948 368L934 354M930 330L948 368M838 389L845 411M838 389L855 401M855 401L845 411M855 401L861 425M855 401L870 381M883 411L855 401M870 381L883 411M870 381L905 394M905 394L883 411M905 394L910 428M905 394L923 375M935 407L905 394M923 375L935 407M923 375L948 387M948 387L935 407M948 387L959 432M948 387L948 368M960 406L948 387M948 368L960 406M845 411L846 435M845 411L861 425M861 425L846 435M861 425L858 451M861 425L883 411M884 442L861 425M883 411L884 442M883 411L910 428M910 428L884 442M910 428L914 460M910 428L935 407M940 446L910 428M935 407L940 446M935 407L959 432M959 432L940 446M959 432L960 470M959 432L960 406M967 452L959 432M845 411L845 411M845 411L847 435" stroke="url(#tg)" stroke-width="0.9" stroke-opacity="0.22" fill="none"/><path d="M846 435h0.1M858 451h0.1M884 442h0.1M914 460h0.1M940 446h0.1M960 470h0.1M845 459h0.1M857 475h0.1M883 472h0.1M909 498h0.1M940 485h0.1M960 519h0.1M839 482h0.1M848 500h0.1M879 499h0.1M902 535h0.1M935 532h0.1M950 563h0.1M964 544h0.1M829 502h0.1M834 522h0.1M869 529h0.1M886 563h0.1M925 570h0.1M933 599h0.1M814 523h0.1M819 542h0.1M849 555h0.1M860 597h0.1M900 605h0.1M899 638h0.1M798 538h0.1M798 559h0.1M830 577h0.1M831 615h0.1M870 631h0.1M866 664h0.1M776 553h0.1M774 576h0.1M798 597h0.1M802 633h0.1M837 656h0.1M826 689h0.1M851 684h0.1M756 563h0.1M745 584h0.1M770 612h0.1M763 648h0.1M798 671h0.1M786 703h0.1M732 570h0.1M718 588h0.1M742 619h0.1M728 654h0.1M759 684h0.1M735 718h0.1M705 571h0.1M695 588h0.1M711 621h0.1M695 657h0.1M717 696h0.1M693 719h0.1M681 569h0.1M668 584h0.1M677 620h0.1M659 652h0.1M673 690h0.1M644 709h0.1M656 562h0.1M641 576h0.1M645 606h0.1M624 637h0.1M634 678h0.1M607 693h0.1M637 554h0.1M619 560h0.1M621 594h0.1M592 611h0.1M594 655h0.1M571 665h0.1M615 538h0.1M599 546h0.1M593 576h0.1M569 590h0.1M562 627h0.1M538 635h0.1M600 524h0.1M583 524h0.1M575 553h0.1M543 560h0.1M537 597h0.1M511 596h0.1M519 621h0.1M583 503h0.1M567 502h0.1M555 527h0.1M527 531h0.1M516 567h0.1M490 561h0.1M494 584h0.1M573 480h0.1M558 479h0.1M544 501h0.1M516 501h0.1M497 528h0.1M475 519h0.1M476 545h0.1M568 460h0.1M555 448h0.1M535 470h0.1M508 467h0.1M487 486h0.1M469 472h0.1M565 438h0.1M554 425h0.1M533 441h0.1M513 428h0.1M485 447h0.1M471 431h0.1M464 452h0.1M568 412h0.1M561 399h0.1M537 414h0.1M517 392h0.1M492 410h0.1M478 392h0.1M574 389h0.1M568 376h0.1M541 384h0.1M525 362h0.1M497 374h0.1M490 343h0.1M583 369h0.1M578 354h0.1M557 353h0.1M540 323h0.1M513 330h0.1M504 305h0.1M597 350h0.1M598 329h0.1M569 326h0.1M562 293h0.1M531 295h0.1M528 262h0.1M616 333h0.1M617 316h0.1M588 303h0.1M587 270h0.1M555 256h0.1M559 230h0.1M535 242h0.1M634 321h0.1M644 301h0.1M616 284h0.1M622 249h0.1M587 234h0.1M598 203h0.1M660 309h0.1M665 293h0.1M645 270h0.1M658 234h0.1M628 211h0.1M644 187h0.1M681 304h0.1M694 289h0.1M676 264h0.1M696 232h0.1M674 204h0.1M689 185h0.1M707 302h0.1M723 288h0.1M709 265h0.1M733 239h0.1M716 208h0.1M736 191h0.1M728 303h0.1M750 294h0.1M743 267h0.1M768 251h0.1M753 214h0.1M782 211h0.1M763 194h0.1M756 310h0.1M770 303h0.1M770 277h0.1M795 264h0.1M794 238h0.1M819 229h0.1M805 214h0.1M776 319h0.1M793 315h0.1M799 295h0.1M827 288h0.1M825 254h0.1M857 256h0.1M840 237h0.1M797 334h0.1M815 332h0.1M818 312h0.1M850 304h0.1M858 277h0.1M888 284h0.1M873 263h0.1M815 351h0.1M832 354h0.1M842 334h0.1M873 332h0.1M884 304h0.1M912 315h0.1M827 368h0.1M847 378h0.1M860 359h0.1M893 365h0.1M908 336h0.1M934 354h0.1M838 389h0.1M855 401h0.1M870 381h0.1M905 394h0.1M923 375h0.1M948 387h0.1M948 368h0.1M845 411h0.1M861 425h0.1M883 411h0.1M910 428h0.1M935 407h0.1M959 432h0.1" stroke="#b8b0ff" stroke-width="1.6" stroke-linecap="round" stroke-opacity="0.35" fill="none"/></svg>
<svg class="a" style="left:0;top:0" width="1493" height="903">
<circle cx="404" cy="724" r="25.5" fill="#e84242"/>
<circle cx="397.5" cy="717.5" r="5" fill="#f2a0a6" opacity="0.85"/>
<circle cx="606" cy="724" r="25.5" fill="#4690e8"/>
<circle cx="599.5" cy="717.5" r="5" fill="#a8c8f4" opacity="0.85"/>
<circle cx="808" cy="724" r="25.5" fill="#3ec870"/>
<circle cx="801.5" cy="717.5" r="5" fill="#a4e6bc" opacity="0.85"/>
<circle cx="1011" cy="724" r="25.5" fill="#e8c83e"/>
<circle cx="1004.5" cy="717.5" r="5" fill="#f4e4a4" opacity="0.85"/>
</svg>
<div class="a" style="left:1214px;top:81px;width:279px;height:819px;background:#0f0f1a"></div>
<div class="a" style="left:1214px;top:110px;width:1px;height:790px;background:#8e969a"></div>
<div class="a" style="left:1214px;top:899px;width:279px;height:1px;background:#8e969a"></div>
<div class="a" style="left:1277px;top:110px;width:216px;height:1px;background:#5a5f66"></div>
<div class="a" style="left:1214px;top:81px;width:64px;height:30px;background:#0f0f1a;border:1px solid #5a5f66;border-bottom:none;color:#f0f0f4;font-size:13px;display:flex;align-items:center;justify-content:center;line-height:1">PHYSICS</div>
<div class="a" style="left:1279px;top:81px;width:60px;height:30px;background:linear-gradient(#2a2a36,#16161f);border:1px solid #5a5f66;color:#e8e8ee;font-size:13px;display:flex;align-items:center;justify-content:center;line-height:1">SOUND</div>
<div class="a" style="left:1340px;top:81px;width:64px;height:30px;background:linear-gradient(#2a2a36,#16161f);border:1px solid #5a5f66;color:#e8e8ee;font-size:13px;display:flex;align-items:center;justify-content:center;line-height:1">VISUALS</div>
<div class="a" style="left:1405px;top:81px;width:60px;height:30px;background:linear-gradient(#2a2a36,#16161f);border:1px solid #5a5f66;color:#e8e8ee;font-size:13px;display:flex;align-items:center;justify-content:center;line-height:1">MIDI</div>
<div class="lbl" style="left:1226px;top:119px">Physics Feel</div>
<div class="a" style="left:1235px;top:133px;width:253px;height:114px;background:#181828;border:1px solid #27274a"></div>
<svg class="a" style="left:0;top:0" width="1493" height="903">
<path d="M1298.5 133V247" stroke="#25253e"/>
<path d="M1235 161.5H1488" stroke="#25253e"/>
<path d="M1361.5 133V247" stroke="#25253e"/>
<path d="M1235 190.0H1488" stroke="#25253e"/>
<path d="M1424.5 133V247" stroke="#25253e"/>
<path d="M1235 218.5H1488" stroke="#25253e"/>
</svg>
<div class="t" style="left:1235px;top:251px;font-size:9px;color:#9c9ca8">Gravity</div>
<div class="t" style="left:1440px;top:251px;width:47px;text-align:right;font-size:9px;color:#e8e8ee">0.4246</div>
<svg class="a" style="left:0;top:0" width="1493" height="903">
<path d="M1342.5 133V247" stroke="#7a4e30" stroke-width="1"/>
<path d="M1235 232.5H1488" stroke="#3a2e3e" stroke-width="1"/>
<path d="M1235 246.5H1488" stroke="#7a4e30" stroke-width="1"/>
<circle cx="1255.5" cy="161.5" r="1.5" fill="#c87a30" opacity="0.95"/>
<circle cx="1256.0" cy="161.8" r="1.5" fill="#c87a30" opacity="0.93"/>
<circle cx="1256.3" cy="162.4" r="1.5" fill="#c87a30" opacity="0.91"/>
<circle cx="1256.6" cy="163.2" r="1.5" fill="#c87a30" opacity="0.88"/>
<circle cx="1256.9" cy="164.3" r="1.5" fill="#c87a30" opacity="0.86"/>
<circle cx="1257.2" cy="165.6" r="1.5" fill="#c87a30" opacity="0.84"/>
<circle cx="1257.4" cy="167.2" r="1.5" fill="#c87a30" opacity="0.82"/>
<circle cx="1257.7" cy="168.9" r="1.5" fill="#c87a30" opacity="0.80"/>
<circle cx="1257.9" cy="170.7" r="1.5" fill="#c87a30" opacity="0.77"/>
<circle cx="1258.1" cy="172.8" r="1.5" fill="#c87a30" opacity="0.75"/>
<circle cx="1258.4" cy="175.0" r="1.5" fill="#c87a30" opacity="0.73"/>
<circle cx="1258.6" cy="177.4" r="1.5" fill="#c87a30" opacity="0.71"/>
<circle cx="1258.8" cy="179.9" r="1.5" fill="#c87a30" opacity="0.69"/>
<circle cx="1259.1" cy="182.6" r="1.5" fill="#c87a30" opacity="0.66"/>
<circle cx="1259.3" cy="185.4" r="1.5" fill="#c87a30" opacity="0.64"/>
<circle cx="1259.5" cy="188.4" r="1.5" fill="#c87a30" opacity="0.62"/>
<circle cx="1259.7" cy="191.5" r="1.5" fill="#c87a30" opacity="0.60"/>
<circle cx="1259.9" cy="194.7" r="1.5" fill="#c87a30" opacity="0.58"/>
<circle cx="1260.1" cy="198.1" r="1.5" fill="#c87a30" opacity="0.55"/>
<circle cx="1260.3" cy="201.6" r="1.5" fill="#c87a30" opacity="0.53"/>
<circle cx="1260.5" cy="205.3" r="1.5" fill="#c87a30" opacity="0.51"/>
<circle cx="1260.7" cy="209.1" r="1.5" fill="#c87a30" opacity="0.49"/>
<circle cx="1260.9" cy="213.0" r="1.5" fill="#c87a30" opacity="0.47"/>
<circle cx="1261.1" cy="217.0" r="1.5" fill="#c87a30" opacity="0.44"/>
<circle cx="1261.3" cy="221.2" r="1.5" fill="#c87a30" opacity="0.42"/>
<circle cx="1261.5" cy="225.5" r="1.5" fill="#c87a30" opacity="0.40"/>
<circle cx="1262.0" cy="232.0" r="1.5" fill="#c87a30" opacity="0.60"/>
<circle cx="1262.5" cy="229.0" r="1.5" fill="#c87a30" opacity="0.60"/>
<circle cx="1263.0" cy="226.0" r="1.5" fill="#c87a30" opacity="0.60"/>
<circle cx="1264.0" cy="223.5" r="1.5" fill="#c87a30" opacity="0.60"/>
<circle cx="1265.0" cy="225.0" r="1.5" fill="#c87a30" opacity="0.60"/>
<circle cx="1265.5" cy="227.5" r="1.5" fill="#c87a30" opacity="0.60"/>
<circle cx="1266.3" cy="230.0" r="1.5" fill="#c87a30" opacity="0.60"/>
<circle cx="1267.0" cy="232.0" r="1.5" fill="#c87a30" opacity="0.60"/>
<circle cx="1342" cy="246.5" r="5.5" fill="#e08a35" stroke="#d8d8e0" stroke-width="1"/>
</svg>
<div class="t" style="left:1223px;top:162px;font-size:9px;color:#9c9ca8;transform:rotate(-90deg);transform-origin:0 0">0.0000</div>
<div class="t" style="left:1223px;top:247px;font-size:9px;color:#7c7c88;transform:rotate(-90deg);transform-origin:0 0">Damping</div>
<div class="lbl" style="left:1226px;top:273px">Central Mass</div>
<div class="a" style="left:1235px;top:287px;width:253px;height:114px;background:#181828;border:1px solid #27274a"></div>
<svg class="a" style="left:0;top:0" width="1493" height="903">
<path d="M1298.5 287V401" stroke="#25253e"/>
<path d="M1235 315.5H1488" stroke="#25253e"/>
<path d="M1361.5 287V401" stroke="#25253e"/>
<path d="M1235 344.0H1488" stroke="#25253e"/>
<path d="M1424.5 287V401" stroke="#25253e"/>
<path d="M1235 372.5H1488" stroke="#25253e"/>
</svg>
<div class="t" style="left:1235px;top:405px;font-size:9px;color:#9c9ca8">Strength</div>
<div class="t" style="left:1440px;top:405px;width:47px;text-align:right;font-size:9px;color:#e8e8ee">0.0000</div>
<svg class="a" style="left:0;top:0" width="1493" height="903">
<circle cx="1361.5" cy="344" r="8" fill="none" stroke="#6a4430" stroke-width="1" opacity="0.55"/>
<circle cx="1361.5" cy="344" r="16" fill="none" stroke="#6a4430" stroke-width="1" opacity="0.5"/>
<circle cx="1361.5" cy="344" r="24" fill="none" stroke="#6a4430" stroke-width="1" opacity="0.45"/>
<circle cx="1361.5" cy="344" r="32" fill="none" stroke="#6a4430" stroke-width="1" opacity="0.38"/>
<circle cx="1361.5" cy="344" r="39.5" fill="none" stroke="#6a4430" stroke-width="1" opacity="0.3"/>
<circle cx="1361.5" cy="344" r="47" fill="none" stroke="#6a4430" stroke-width="1" opacity="0.22"/>
<circle cx="1361.5" cy="344" r="3" fill="#3c3038"/>
<path d="M1235.5 287V401" stroke="#6e4a32" stroke-width="1"/>
<path d="M1235 400.5H1488" stroke="#7a4e30" stroke-width="1"/>
<circle cx="1235" cy="401" r="5.5" fill="#e08a35" stroke="#d8d8e0" stroke-width="1"/>
</svg>
<div class="t" style="left:1223px;top:316px;font-size:9px;color:#9c9ca8;transform:rotate(-90deg);transform-origin:0 0">0.1000</div>
<div class="t" style="left:1223px;top:399px;font-size:9px;color:#7c7c88;transform:rotate(-90deg);transform-origin:0 0">Size</div>
<div class="a" style="left:1221px;top:425px;width:266px;height:40px;border-radius:5px;background:#8b5a2f"></div>
<div class="t" style="left:1229px;top:440px;font-size:9px;color:#b08a68">Friction</div>
<div class="t" style="left:1420px;top:440px;width:59px;text-align:right;font-size:9.5px;color:#f0f0f0">1.0000</div>
<svg class="a" style="left:1470px;top:878px" width="23" height="22"><path d="M24 4L6.5 21.5M24 10L12 21.5M24 15L17.5 21.5" stroke="#a8a8a8" stroke-width="1.4"/></svg>
<div class="a" style="left:201px;top:800px;width:1013px;height:100px;background:#0a0a14"></div>
<div class="a" style="left:1154px;top:800px;width:60px;height:100px;background:#161630;border-top:1px solid #3a3a6a"></div>
<div class="a" style="left:1164px;top:830px;width:40px;height:40px;border-radius:7px;background:#1c1b2a;border:1px solid #34335a;color:#e8e8f0;font-size:16px;font-weight:bold;display:flex;align-items:center;justify-content:center;line-height:1">+</div>
<div class="a" style="left:201px;top:800px;width:238px;height:100px;background:#4a3535;border:1px solid #e08a35"></div>
<div class="a" style="left:202px;top:801px;width:236px;height:98px;border:2px solid #8b5a30"></div>
<div class="t" style="left:201px;top:826px;width:238px;text-align:center;font-size:12.5px;color:#e8e4e8;word-spacing:1px">E Minor&nbsp;&nbsp; 2 bars</div>
<svg class="a" style="left:201px;top:800px" width="238" height="100"><rect x="5.5" y="60.5" width="30" height="30" fill="#c07530" stroke="#f0dcc0" stroke-opacity="0.55"/><rect x="18.5" y="60.5" width="17" height="17" fill="none" stroke="#f0dcc0" stroke-opacity="0.6"/><rect x="38.5" y="60.5" width="30" height="30" fill="#c07530" stroke="#f0dcc0" stroke-opacity="0.55"/><rect x="51.5" y="60.5" width="17" height="17" fill="none" stroke="#f0dcc0" stroke-opacity="0.6"/><rect x="71.5" y="60.5" width="30" height="30" fill="#c98a52" stroke="#e6d2b8" stroke-opacity="0.6"/><circle cx="86.5" cy="88" r="1.8" fill="#fff"/><rect x="104.5" y="60.5" width="30" height="30" fill="none" stroke="#8a8282" stroke-opacity="0.9"/><rect x="117" y="60" width="18" height="18" fill="#c07530"/><rect x="137.5" y="60.5" width="30" height="30" fill="#c07530" stroke="#f0dcc0" stroke-opacity="0.55"/><rect x="150.5" y="60.5" width="17" height="17" fill="none" stroke="#f0dcc0" stroke-opacity="0.6"/><rect x="170.5" y="60.5" width="30" height="30" fill="#c07530" stroke="#f0dcc0" stroke-opacity="0.55"/><rect x="183.5" y="60.5" width="17" height="17" fill="none" stroke="#f0dcc0" stroke-opacity="0.6"/><rect x="203.5" y="60.5" width="30" height="30" fill="#c07530" stroke="#f0dcc0" stroke-opacity="0.55"/></svg>
<div class="a" style="left:439px;top:800px;width:239px;height:100px;background:#4f3636;border:1px solid #c8783a"></div>
<div class="t" style="left:439px;top:826px;width:239px;text-align:center;font-size:12.5px;color:#e8e4e8;word-spacing:1px">F# Dorian&nbsp;&nbsp; 2 bars</div>
<svg class="a" style="left:439px;top:800px" width="239" height="100"><rect x="5.5" y="60.5" width="30" height="30" fill="none" stroke="#8a8282" stroke-opacity="0.9"/><rect x="18" y="60" width="18" height="18" fill="#c87530"/><rect x="38.5" y="60.5" width="30" height="30" fill="none" stroke="#8a8282" stroke-opacity="0.9"/><rect x="51" y="60" width="18" height="18" fill="#c87530"/><rect x="71.5" y="60.5" width="30" height="30" fill="#c87530" stroke="#f0dcc0" stroke-opacity="0.55"/><rect x="104.5" y="60.5" width="30" height="30" fill="none" stroke="#8a8282" stroke-opacity="0.9"/><rect x="117" y="60" width="18" height="18" fill="#c98a52"/><circle cx="127.0" cy="75" r="1.6" fill="#fff"/><rect x="137.5" y="60.5" width="30" height="30" fill="none" stroke="#8a8282" stroke-opacity="0.9"/><rect x="150" y="60" width="18" height="18" fill="#c87530"/><rect x="170.5" y="60.5" width="30" height="30" fill="#c87530" stroke="#f0dcc0" stroke-opacity="0.55"/><rect x="183.5" y="60.5" width="17" height="17" fill="none" stroke="#f0dcc0" stroke-opacity="0.6"/><rect x="203.5" y="60.5" width="30" height="30" fill="#c87530" stroke="#f0dcc0" stroke-opacity="0.55"/></svg>
<div class="a" style="left:678px;top:800px;width:238px;height:100px;background:#404a35;border:1px solid #8cb040"></div>
<div class="t" style="left:678px;top:826px;width:238px;text-align:center;font-size:12.5px;color:#e8e4e8;word-spacing:1px">A Mixolydian&nbsp;&nbsp; 2 bars</div>
<svg class="a" style="left:678px;top:800px" width="238" height="100"><rect x="5.5" y="60.5" width="30" height="30" fill="none" stroke="#8a8282" stroke-opacity="0.9"/><rect x="18" y="60" width="18" height="18" fill="#9bc030"/><rect x="38.5" y="60.5" width="30" height="30" fill="#9bc030" stroke="#f0dcc0" stroke-opacity="0.55"/><rect x="51.5" y="60.5" width="17" height="17" fill="none" stroke="#f0dcc0" stroke-opacity="0.6"/><rect x="71.5" y="60.5" width="30" height="30" fill="#9bc030" stroke="#f0dcc0" stroke-opacity="0.55"/><rect x="104.5" y="60.5" width="30" height="30" fill="none" stroke="#8a8282" stroke-opacity="0.9"/><rect x="117" y="60" width="18" height="18" fill="#9bc030"/><rect x="137.5" y="60.5" width="30" height="30" fill="#9bc030" stroke="#f0dcc0" stroke-opacity="0.55"/><rect x="150.5" y="60.5" width="17" height="17" fill="none" stroke="#f0dcc0" stroke-opacity="0.6"/><rect x="170.5" y="60.5" width="30" height="30" fill="#a8c860" stroke="#e6d2b8" stroke-opacity="0.6"/><circle cx="185.5" cy="88" r="1.8" fill="#fff"/><rect x="183.5" y="60.5" width="17" height="17" fill="none" stroke="#f0dcc0" stroke-opacity="0.6"/><rect x="203.5" y="60.5" width="30" height="30" fill="#9bc030" stroke="#f0dcc0" stroke-opacity="0.55"/></svg>
<div class="a" style="left:916px;top:800px;width:238px;height:100px;background:#433c35;border:1px solid #8c7a3a"></div>
<div class="t" style="left:916px;top:826px;width:238px;text-align:center;font-size:12.5px;color:#e8e4e8;word-spacing:1px">G Major&nbsp;&nbsp; 2 bars</div>
<svg class="a" style="left:916px;top:800px" width="238" height="100"><rect x="5.5" y="60.5" width="30" height="30" fill="#a88f2c" stroke="#f0dcc0" stroke-opacity="0.55"/><rect x="18.5" y="60.5" width="17" height="17" fill="none" stroke="#f0dcc0" stroke-opacity="0.6"/><rect x="38.5" y="60.5" width="30" height="30" fill="#a88f2c" stroke="#f0dcc0" stroke-opacity="0.55"/><rect x="51.5" y="60.5" width="17" height="17" fill="none" stroke="#f0dcc0" stroke-opacity="0.6"/><rect x="71.5" y="60.5" width="30" height="30" fill="#a88f2c" stroke="#f0dcc0" stroke-opacity="0.55"/><rect x="104.5" y="60.5" width="30" height="30" fill="none" stroke="#8a8282" stroke-opacity="0.9"/><rect x="117" y="60" width="18" height="18" fill="#a88f2c"/><rect x="137.5" y="60.5" width="30" height="30" fill="#b8a45c" stroke="#e6d2b8" stroke-opacity="0.6"/><circle cx="152.5" cy="88" r="1.8" fill="#fff"/><rect x="150.5" y="60.5" width="17" height="17" fill="none" stroke="#f0dcc0" stroke-opacity="0.6"/><rect x="170.5" y="60.5" width="30" height="30" fill="#a88f2c" stroke="#f0dcc0" stroke-opacity="0.55"/><rect x="183.5" y="60.5" width="17" height="17" fill="none" stroke="#f0dcc0" stroke-opacity="0.6"/><rect x="203.5" y="60.5" width="30" height="30" fill="#a88f2c" stroke="#f0dcc0" stroke-opacity="0.55"/></svg></body></html>
